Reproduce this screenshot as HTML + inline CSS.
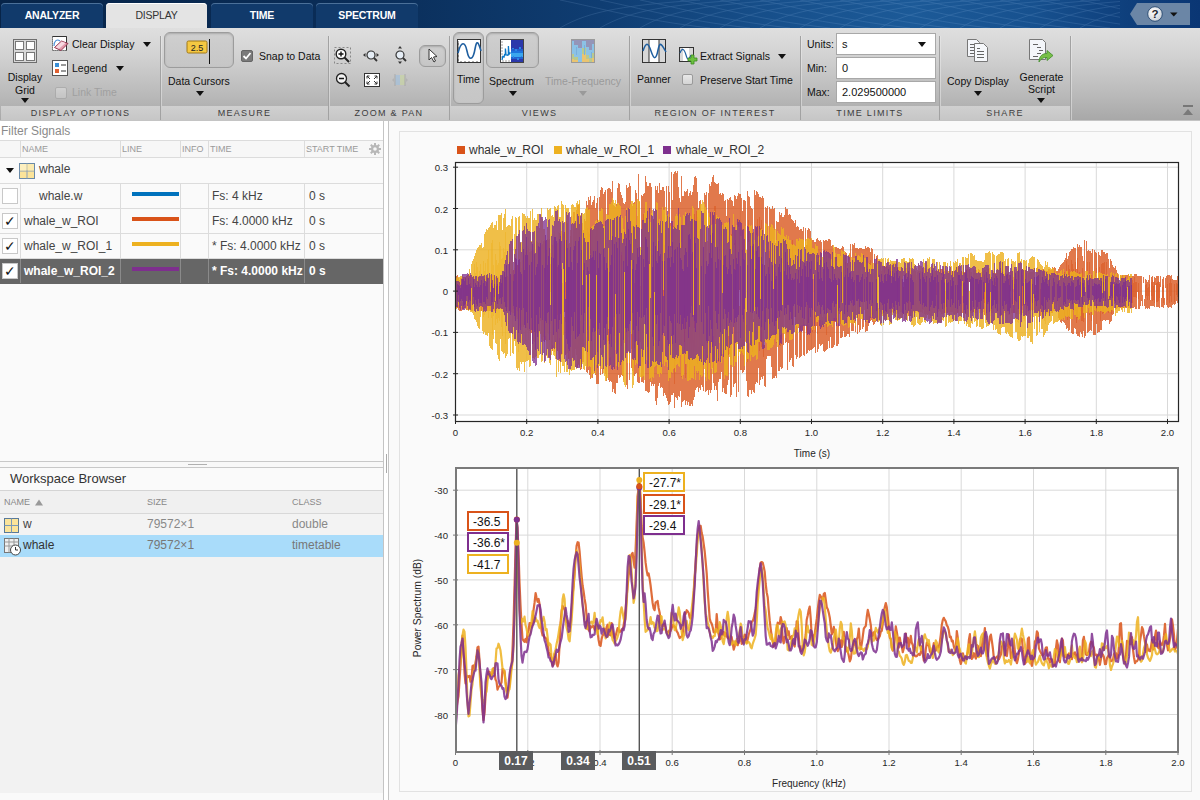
<!DOCTYPE html>
<html><head><meta charset="utf-8">
<style>
*{box-sizing:border-box;margin:0;padding:0}
html,body{width:1200px;height:800px;overflow:hidden;background:#fafafa;font-family:"Liberation Sans",sans-serif;color:#222}
.a{position:absolute}
#hdr{left:0;top:0;width:1200px;height:28px;background:linear-gradient(90deg,#072448 0%,#0a2d58 30%,#0f3d72 50%,#17508c 65%,#1c5a98 76%,#17518f 86%,#0e3f7c 94%,#0a3674 100%)}
.tab{position:absolute;top:3px;height:25px;background:#113a6b;border-radius:4px 4px 0 0;color:#fff;font-weight:bold;font-size:10.5px;letter-spacing:-0.2px;text-align:center;line-height:25px;box-shadow:inset 0 1px 0 #4b7099}
.tab.act{background:#e4e4e4;color:#333;font-weight:normal;box-shadow:inset 0 1px 0 #fff;height:26px}
#help{left:1131px;top:3px;width:59px;height:22px;background:#6b86a6}
#ribbon{left:0;top:28px;width:1200px;height:93px;background:linear-gradient(180deg,#dfdfdf 0%,#d2d2d2 30%,#b8b8b8 75%,#a8a8a8 100%);border-bottom:1px solid #c4c4c4}
.sec{position:absolute;top:0;height:92px}
.sep{position:absolute;top:8px;width:1px;height:84px;background:#a2a2a2;box-shadow:1px 0 0 rgba(235,235,235,0.5)}
.lbl{position:absolute;top:78px;height:14px;background:linear-gradient(180deg,#d0d0d0,#c6c6c6);color:#3d3d3d;font-size:9px;letter-spacing:1.3px;text-align:center;line-height:14px}
.rt{position:absolute;margin-top:1px;font-size:10.5px;color:#111;white-space:nowrap}
.dd{position:absolute;width:0;height:0;border-left:4px solid transparent;border-right:4px solid transparent;border-top:5px solid #111}
.cb{position:absolute;width:12px;height:12px;border:1px solid #9a9a9a;border-radius:2px;background:linear-gradient(#e8e8e8,#d4d4d4)}
.btnhl{position:absolute;border:1px solid #9c9c9c;border-radius:6px;background:linear-gradient(180deg,#cfcfcf,#c6c6c6);box-shadow:inset 0 1px 2px #aaa}
.inp{position:absolute;background:#fff;border:1px solid #a8a8a8;font-size:11px;line-height:20px;padding-left:5px;color:#111}
/* left panel */
#lp{left:0;top:121px;width:384px;height:679px;background:#fafafa;border-right:1px solid #c4c4c4}
.tr{position:absolute;left:0;width:383px;border-bottom:1px solid #dcdcdc}
.tc{position:absolute;top:0;height:100%;border-right:1px solid #dcdcdc;font-size:12px;color:#444;white-space:nowrap;overflow:hidden}
.th{font-size:9px;color:#9a9a9a;line-height:16px;padding-left:2px}
.cbx{position:absolute;left:2px;width:16px;height:16px;border:1px solid #c8c8c8;background:#fff;font-size:14px;line-height:15px;text-align:center;color:#111}
.ln{position:absolute;left:12px;width:47px;height:4px}
#rp{left:388px;top:121px;width:811px;height:679px;background:#fafafa;border-left:1px solid #c4c4c4}
.tick{font-size:11px;color:#222;position:absolute;white-space:nowrap}
</style></head><body>
<div id="hdr" class="a">
 <svg class="a" style="left:560px;top:0" width="560" height="28" opacity="0.22"><path d="M0 28 C30 10,70 5,140 0" stroke="#9cc3ee" stroke-width="0.7" fill="none"/><path d="M0 0 C40 8,80 20,150 28" stroke="#9cc3ee" stroke-width="0.7" fill="none"/><path d="M40 28 C70 10,110 5,180 0" stroke="#9cc3ee" stroke-width="0.7" fill="none"/><path d="M40 0 C80 8,120 20,190 28" stroke="#9cc3ee" stroke-width="0.7" fill="none"/><path d="M80 28 C110 10,150 5,220 0" stroke="#9cc3ee" stroke-width="0.7" fill="none"/><path d="M80 0 C120 8,160 20,230 28" stroke="#9cc3ee" stroke-width="0.7" fill="none"/><path d="M120 28 C150 10,190 5,260 0" stroke="#9cc3ee" stroke-width="0.7" fill="none"/><path d="M120 0 C160 8,200 20,270 28" stroke="#9cc3ee" stroke-width="0.7" fill="none"/><path d="M160 28 C190 10,230 5,300 0" stroke="#9cc3ee" stroke-width="0.7" fill="none"/><path d="M160 0 C200 8,240 20,310 28" stroke="#9cc3ee" stroke-width="0.7" fill="none"/><path d="M200 28 C230 10,270 5,340 0" stroke="#9cc3ee" stroke-width="0.7" fill="none"/><path d="M200 0 C240 8,280 20,350 28" stroke="#9cc3ee" stroke-width="0.7" fill="none"/><path d="M240 28 C270 10,310 5,380 0" stroke="#9cc3ee" stroke-width="0.7" fill="none"/><path d="M240 0 C280 8,320 20,390 28" stroke="#9cc3ee" stroke-width="0.7" fill="none"/><path d="M280 28 C310 10,350 5,420 0" stroke="#9cc3ee" stroke-width="0.7" fill="none"/><path d="M280 0 C320 8,360 20,430 28" stroke="#9cc3ee" stroke-width="0.7" fill="none"/><path d="M320 28 C350 10,390 5,460 0" stroke="#9cc3ee" stroke-width="0.7" fill="none"/><path d="M320 0 C360 8,400 20,470 28" stroke="#9cc3ee" stroke-width="0.7" fill="none"/><path d="M360 28 C390 10,430 5,500 0" stroke="#9cc3ee" stroke-width="0.7" fill="none"/><path d="M360 0 C400 8,440 20,510 28" stroke="#9cc3ee" stroke-width="0.7" fill="none"/><path d="M400 28 C430 10,470 5,540 0" stroke="#9cc3ee" stroke-width="0.7" fill="none"/><path d="M400 0 C440 8,480 20,550 28" stroke="#9cc3ee" stroke-width="0.7" fill="none"/><path d="M440 28 C470 10,510 5,580 0" stroke="#9cc3ee" stroke-width="0.7" fill="none"/><path d="M440 0 C480 8,520 20,590 28" stroke="#9cc3ee" stroke-width="0.7" fill="none"/><path d="M480 28 C510 10,550 5,620 0" stroke="#9cc3ee" stroke-width="0.7" fill="none"/><path d="M480 0 C520 8,560 20,630 28" stroke="#9cc3ee" stroke-width="0.7" fill="none"/><path d="M520 28 C550 10,590 5,660 0" stroke="#9cc3ee" stroke-width="0.7" fill="none"/><path d="M520 0 C560 8,600 20,670 28" stroke="#9cc3ee" stroke-width="0.7" fill="none"/></svg>
 <div class="tab" style="left:1px;width:102px">ANALYZER</div>
 <div class="tab act" style="left:106px;width:101px">DISPLAY</div>
 <div class="tab" style="left:211px;width:102px">TIME</div>
 <div class="tab" style="left:316px;width:102px">SPECTRUM</div>
 <svg class="a" style="left:1118px;top:3px" width="72" height="22"><path d="M19 0H72V22H19L12 11Z" fill="#6b86a6"/><defs><radialGradient id="hg" cx="0.4" cy="0.35" r="0.7"><stop offset="0" stop-color="#fff"/><stop offset="1" stop-color="#c8ced6"/></radialGradient></defs><circle cx="37" cy="11" r="7.3" fill="url(#hg)" stroke="#24466e" stroke-width="0.9"/><text x="37" y="15.3" font-family="Liberation Sans" font-weight="bold" font-size="11.5" text-anchor="middle" fill="#1d2630">?</text><path d="M52 9.5h7.5l-3.75 4z" fill="#111"/></svg>
</div>
<div id="ribbon" class="a">
 <!-- separators -->
 <div class="sep" style="left:160px"></div>
 <div class="sep" style="left:328px"></div>
 <div class="sep" style="left:449px"></div>
 <div class="sep" style="left:629px"></div>
 <div class="sep" style="left:800px"></div>
 <div class="sep" style="left:939px"></div>
 <div class="sep" style="left:1070px"></div>
 <!-- labels -->
 <div class="lbl" style="left:1px;width:159px">DISPLAY OPTIONS</div>
 <div class="lbl" style="left:161px;width:167px">MEASURE</div>
 <div class="lbl" style="left:329px;width:120px">ZOOM &amp; PAN</div>
 <div class="lbl" style="left:450px;width:179px">VIEWS</div>
 <div class="lbl" style="left:630px;width:170px">REGION OF INTEREST</div>
 <div class="lbl" style="left:801px;width:138px">TIME LIMITS</div>
 <div class="lbl" style="left:940px;width:130px">SHARE</div>
 <!-- DISPLAY OPTIONS -->
 <svg class="a" style="left:13px;top:11px" width="25" height="24"><rect x="0.5" y="0.5" width="23" height="23" fill="#d8d8d8" stroke="#6e6e6e"/><rect x="2.5" y="2.5" width="8" height="8" fill="#fff" stroke="#777" stroke-width="1"/><rect x="13.5" y="2.5" width="8" height="8" fill="#fff" stroke="#777"/><rect x="2.5" y="13.5" width="8" height="8" fill="#fff" stroke="#777"/><rect x="13.5" y="13.5" width="8" height="8" fill="#fff" stroke="#777"/></svg>
 <div class="rt" style="left:5px;top:42px;width:40px;text-align:center;line-height:13px">Display<br>Grid</div>
 <div class="dd" style="left:21px;top:70px"></div>
 <svg class="a" style="left:52px;top:8px" width="17" height="16"><rect x="0.5" y="0.5" width="14" height="14" fill="#fff" stroke="#444" stroke-dasharray="1.2,0.8"/><path d="M14.5 0.5V14.5M0.5 0.5H14.5" stroke="#333"/><path d="M2 10 C2 5, 5 2.5, 8 5" stroke="#4a90d9" stroke-width="1.1" fill="none"/><path d="M2.5 11.5 L9.5 5 L16 7.5 L9 14.5Z" fill="#e39aab" stroke="#8c2a46" stroke-width="0.9"/><path d="M3.5 11.2 L9.8 5.6 L13.5 7 L7 12.8Z" fill="#f6d8e0"/></svg>
 <div class="rt" style="left:72px;top:9px">Clear Display</div>
 <div class="dd" style="left:143px;top:14px"></div>
 <svg class="a" style="left:52px;top:32px" width="17" height="17"><rect x="0.5" y="0.5" width="15" height="15" fill="#fff" stroke="#555"/><rect x="3" y="3" width="4" height="4" fill="#3a8fd6"/><rect x="3" y="9" width="4" height="4" fill="#e06030"/><path d="M9 5h5M9 11h5" stroke="#333"/></svg>
 <div class="rt" style="left:72px;top:33px">Legend</div>
 <div class="dd" style="left:116px;top:38px"></div>
 <div class="cb" style="left:55px;top:59px;opacity:.45"></div>
 <div class="rt" style="left:72px;top:57px;color:#a0a0a0">Link Time</div>
 <!-- MEASURE -->
 <div class="btnhl" style="left:164px;top:4px;width:70px;height:36px"></div>
 <svg class="a" style="left:186px;top:11px" width="26" height="26"><rect x="1" y="2" width="20" height="12" rx="1.5" fill="#f5c842" stroke="#a07818"/><text x="11" y="12" font-family="Liberation Sans" font-size="9" text-anchor="middle" fill="#222">2.5</text><path d="M23.5 0V25" stroke="#111"/></svg>
 <div class="rt" style="left:168px;top:46px">Data Cursors</div>
 <div class="dd" style="left:196px;top:63px"></div>
 <svg class="a" style="left:241px;top:22px" width="12" height="12"><rect x="0.5" y="0.5" width="11" height="11" rx="1.5" fill="#7a7a7a" stroke="#666"/><path d="M2.5 6 L5 8.5 L9.5 3" stroke="#fff" stroke-width="1.8" fill="none"/></svg>
 <div class="rt" style="left:259px;top:21px">Snap to Data</div>
 <!-- ZOOM PAN -->
 <svg class="a" style="left:334px;top:19px" width="18" height="18"><rect x="0.5" y="0.5" width="16" height="16" fill="none" stroke="#888" stroke-dasharray="2,2"/><circle cx="7" cy="7" r="4.8" fill="#fff" stroke="#222" stroke-width="1.4"/><path d="M4.5 7h5M7 4.5v5" stroke="#111" stroke-width="1.4"/><path d="M10.5 10.5L15 15" stroke="#222" stroke-width="2"/></svg>
 <svg class="a" style="left:362px;top:20px" width="18" height="16"><circle cx="9" cy="7" r="4" fill="#e6eef6" stroke="#333" stroke-width="1.2"/><path d="M12 10L15 13" stroke="#333" stroke-width="1.8"/><path d="M1 7L3.5 5V9Z M17 7L14.5 5V9Z" fill="#333"/></svg>
 <svg class="a" style="left:393px;top:18px" width="16" height="19"><circle cx="7" cy="9" r="4" fill="#e6eef6" stroke="#333" stroke-width="1.2"/><path d="M10 12L13 15" stroke="#333" stroke-width="1.8"/><path d="M7 0L5 2.5H9Z M7 18L5 15.5H9Z" fill="#333"/></svg>
 <div class="btnhl" style="left:419px;top:17px;width:27px;height:22px"></div>
 <svg class="a" style="left:425px;top:20px" width="14" height="16"><path d="M4 1 L4 12 L6.5 9.5 L9 14 L10.5 13 L8.5 9 L12 8.5Z" fill="#fff" stroke="#333" stroke-width="1"/></svg>
 <svg class="a" style="left:335px;top:44px" width="16" height="16"><circle cx="6.5" cy="6.5" r="5" fill="#f2f2f2" stroke="#222" stroke-width="1.3"/><path d="M4 6.5h5" stroke="#111" stroke-width="1.5"/><path d="M10 10L14.5 14.5" stroke="#222" stroke-width="2"/></svg>
 <svg class="a" style="left:364px;top:45px" width="17" height="15"><rect x="0.5" y="0.5" width="15" height="13" fill="#fff" stroke="#333"/><path d="M3 3l3 3M3 3h2.5M3 3v2.5 M13 3l-3 3M13 3h-2.5M13 3v2.5 M3 11l3-3M3 11h2.5M3 11v-2.5 M13 11l-3-3M13 11h-2.5M13 11v-2.5" stroke="#333" fill="none"/></svg>
 <svg class="a" style="left:392px;top:45px" width="17" height="14" opacity="0.6"><rect x="3" y="2" width="10" height="10" fill="#c9d8a0"/><rect x="3" y="2" width="5" height="10" fill="#9ec0e0"/><path d="M3 1v12M13 1v12" stroke="#999"/><path d="M0 7l2-2v4z M16 7l-2-2v4z" fill="#aaa"/></svg>
 <!-- VIEWS -->
 <div class="btnhl" style="left:453px;top:4px;width:31px;height:72px"></div>
 <svg class="a" style="left:457px;top:11px" width="25" height="24"><rect x="0.5" y="0.5" width="23" height="23" fill="#fff" stroke="#333"/><path d="M1 2v21M1 5h1M1 9h1M1 13h1M1 17h1M1 21h1 M4 23v-1M8 23v-1M12 23v-1M16 23v-1M20 23v-1" stroke="#333" stroke-width="0.8"/><path d="M1 14 C4 2, 8 2, 10 12 S16 22, 18 10 S22 6, 24 12" stroke="#1f5fa0" stroke-width="1.6" fill="none"/></svg>
 <div class="rt" style="left:457px;top:44px">Time</div>
 <div class="btnhl" style="left:486px;top:4px;width:53px;height:36px"></div>
 <svg class="a" style="left:500px;top:11px" width="24" height="24"><rect x="0.5" y="0.5" width="23" height="23" fill="#fff" stroke="#444"/><rect x="11" y="1" width="12" height="22" fill="#2b38ab"/><path d="M11 12h12v2H11z" fill="#1d74de"/><path d="M11 14h12v4H11z" fill="#3aa6ee"/><path d="M11 10h12v2H11z" fill="#2160cf"/><path d="M11 18h12v2H11z" fill="#1f63d2"/><path d="M12 9h2v1h-2zM15 10h2v2h-2zM19 8h2v2h-2zM13 17h1v2h-1zM17 19h2v2h-2zM21 17h1v1h-1z" fill="#2a86e6"/><path d="M1.5 3h1M1.5 6h1M1.5 9h1M1.5 12h1M1.5 15h1M1.5 18h1M3 22.5v-1M6 22.5v-1M9 22.5v-1" stroke="#444" stroke-width="1"/><path d="M2 21 L2.8 17.5 L4 18 L4.6 15.5 L5.4 15.8 L5.4 9.5 L6 15.8 L7.5 16.2 L8.4 15.2 L8.4 7 L9 15.3 L10.5 13.5" stroke="#0a78c8" stroke-width="1.3" fill="none"/></svg>
 <div class="rt" style="left:489px;top:46px">Spectrum</div>
 <div class="dd" style="left:509px;top:63px"></div>
 <svg class="a" style="left:571px;top:11px" width="24" height="24"><rect x="0.5" y="0.5" width="23" height="23" fill="#9495b8" stroke="#9a9a9a"/><rect x="1" y="2" width="2" height="21" fill="#8cc2e6"/><rect x="1" y="15" width="2" height="8" fill="#b9c98e"/><rect x="1" y="20" width="2" height="3" fill="#eac470"/><rect x="3" y="6" width="4" height="17" fill="#8cc2e6"/><rect x="3" y="18" width="4" height="5" fill="#b9c98e"/><rect x="3" y="21" width="4" height="2" fill="#eac470"/><rect x="7" y="9" width="4" height="14" fill="#8cc2e6"/><rect x="11" y="2" width="4" height="21" fill="#8cc2e6"/><rect x="11" y="9" width="4" height="14" fill="#b9c98e"/><rect x="11" y="15" width="4" height="8" fill="#eac470"/><rect x="15" y="8" width="3" height="15" fill="#8cc2e6"/><rect x="15" y="16" width="3" height="7" fill="#b9c98e"/><rect x="15" y="20" width="3" height="3" fill="#eac470"/><rect x="18" y="11" width="3" height="12" fill="#8cc2e6"/><rect x="18" y="19" width="3" height="4" fill="#b9c98e"/><rect x="21" y="5" width="2" height="18" fill="#8cc2e6"/><rect x="21" y="14" width="2" height="9" fill="#b9c98e"/><rect x="21" y="19" width="2" height="4" fill="#eac470"/><path d="M5 8h1v8h-1zM13 6h1v10h-1zM20 13h1v6h-1z" fill="#7ab0dc"/></svg>
 <div class="rt" style="left:545px;top:46px;color:#9a9a9a">Time-Frequency</div>
 <div class="dd" style="left:579px;top:63px;border-top-color:#9a9a9a"></div>
 <!-- REGION OF INTEREST -->
 <svg class="a" style="left:642px;top:11px" width="25" height="24"><rect x="0.5" y="0.5" width="23" height="23" fill="#d8d8d8" stroke="#333"/><rect x="7" y="1" width="10" height="22" fill="#fff"/><path d="M7 0.5v23M17 0.5v23" stroke="#333"/><path d="M1 12 C4 3, 6 3, 9 12 S14 21, 16 11 S20 6, 24 13" stroke="#1f5fa0" stroke-width="1.5" fill="none"/></svg>
 <div class="rt" style="left:637px;top:44px">Panner</div>
 <svg class="a" style="left:679px;top:19px" width="19" height="18"><rect x="0.5" y="0.5" width="14" height="14" fill="#d8d8d8" stroke="#333"/><rect x="4" y="1" width="6" height="13" fill="#fff"/><path d="M1 6 C3 1, 5 1, 7 8 S10 12, 12 8" stroke="#1f5fa0" stroke-width="1.2" fill="none"/><path d="M12 8h3v3h3v3h-3v3h-3v-3h-3v-3h3z" fill="#6cc040" stroke="#3a8a20" stroke-width="0.8"/></svg>
 <div class="rt" style="left:700px;top:21px">Extract Signals</div>
 <div class="dd" style="left:778px;top:26px"></div>
 <div class="cb" style="left:682px;top:46px;width:11px;height:11px"></div>
 <div class="rt" style="left:700px;top:45px">Preserve Start Time</div>
 <!-- TIME LIMITS -->
 <div class="rt" style="left:807px;top:9px">Units:</div>
 <div class="inp" style="left:836px;top:5px;width:100px;height:22px">s</div>
 <div class="dd" style="left:918px;top:14px"></div>
 <div class="rt" style="left:807px;top:33px">Min:</div>
 <div class="inp" style="left:836px;top:29px;width:100px;height:22px">0</div>
 <div class="rt" style="left:807px;top:57px">Max:</div>
 <div class="inp" style="left:836px;top:53px;width:100px;height:22px">2.029500000</div>
 <!-- SHARE -->
 <svg class="a" style="left:967px;top:40px;margin-top:-29px" width="24" height="24"><path d="M0.5 0.5h9l3 3v14h-12z" fill="#f4f6fa" stroke="#777"/><path d="M3 5.5h4M3 8.5h5M3 11.5h5M3 14.5h5" stroke="#555" stroke-width="0.9"/><path d="M7.5 4.5h9l4 4v14h-13z" fill="#f6f8fb" stroke="#777"/><path d="M10 9.5h3M10 12.5h7M10 15.5h7M10 18.5h7" stroke="#555" stroke-width="0.9"/></svg>
 <div class="rt" style="left:947px;top:46px">Copy Display</div>
 <div class="dd" style="left:974px;top:63px"></div>
 <svg class="a" style="left:1029px;top:11px" width="26" height="26"><path d="M0.5 0.5h13l3 3v17h-16z" fill="#f4f6fa" stroke="#777"/><path d="M4 5.5h5M8 8.5h4M10 11.5h4M8 14.5h4M4 17.5h5" stroke="#555" stroke-width="0.9"/><path d="M10 23 C10 17, 13.5 14.5, 18 14.5 V11.5 L24 16.5 L18 21.5 V18.5 C14.5 18.5, 12 19.5, 10 23Z" fill="#78c048" stroke="#3d8a28" stroke-width="0.8"/></svg>
 <div class="rt" style="left:1019px;top:42px;width:45px;text-align:center;line-height:12px">Generate<br>Script</div>
 <div class="dd" style="left:1037px;top:70px"></div>
 <svg class="a" style="left:1182px;top:76px" width="12" height="12"><rect x="1" y="1" width="10" height="2" fill="#777"/><path d="M1 11L6 5L11 11Z" fill="#7a7a7a"/></svg>
</div>
<div id="lp" class="a">
 <div class="a" style="left:0;top:0;width:383px;height:20px;background:#fff;border-bottom:1px solid #dcdcdc;font-size:12px;color:#8a8a8a;line-height:21px;padding-left:1px">Filter Signals</div>
 <!-- header -->
 <div class="tr" style="top:20px;height:17px;background:#f7f7f7">
  <div class="tc" style="left:0;width:21px"></div>
  <div class="tc th" style="left:20px;width:101px">NAME</div>
  <div class="tc th" style="left:120px;width:61px">LINE</div>
  <div class="tc th" style="left:180px;width:29px">INFO</div>
  <div class="tc th" style="left:208px;width:97px">TIME</div>
  <div class="tc th" style="left:304px;width:79px;border-right:none">START TIME</div>
  <svg class="a" style="left:369px;top:2px" width="12" height="12"><g fill="#b8b8b8"><circle cx="6" cy="6" r="4"/><rect x="5" y="0" width="2" height="12"/><rect x="0" y="5" width="12" height="2"/><rect x="5" y="0" width="2" height="12" transform="rotate(45 6 6)"/><rect x="5" y="0" width="2" height="12" transform="rotate(-45 6 6)"/></g><circle cx="6" cy="6" r="1.8" fill="#f7f7f7"/></svg>
 </div>
 <!-- whale group -->
 <div class="tr" style="top:37px;height:26px;background:#fafafa">
  <div class="dd" style="left:6px;top:10px;border-top-color:#111"></div>
  <svg class="a" style="left:19px;top:5px" width="16" height="16"><rect x="0.5" y="0.5" width="15" height="15" fill="#fbe49a" stroke="#6a8aa8"/><path d="M8 0.5v15M0.5 8h15" stroke="#8aa0b8"/><rect x="1" y="1" width="6.5" height="6.5" fill="#fdf0c0"/><rect x="8.5" y="1" width="6.5" height="6.5" fill="#fcebb0"/></svg>
  <div class="a" style="left:39px;top:4px;font-size:12px;color:#444">whale</div>
 </div>
 <div class="tr" style="top:63px;height:25px">
  <div class="tc" style="left:0;width:21px"><div class="cbx" style="top:4px"></div></div>
  <div class="tc" style="left:20px;width:101px;padding:5px 0 0 19px">whale.w</div>
  <div class="tc" style="left:120px;width:61px"><div class="ln" style="top:8px;background:#0072bd"></div></div>
  <div class="tc" style="left:180px;width:29px"></div>
  <div class="tc" style="left:208px;width:97px;padding:5px 0 0 4px">Fs: 4 kHz</div>
  <div class="tc" style="left:304px;width:79px;padding:5px 0 0 5px;border-right:none">0 s</div>
 </div>
 <div class="tr" style="top:88px;height:25px">
  <div class="tc" style="left:0;width:21px"><div class="cbx" style="top:4px">&#10003;</div></div>
  <div class="tc" style="left:20px;width:101px;padding:5px 0 0 4px">whale_w_ROI</div>
  <div class="tc" style="left:120px;width:61px"><div class="ln" style="top:8px;background:#d95319"></div></div>
  <div class="tc" style="left:180px;width:29px"></div>
  <div class="tc" style="left:208px;width:97px;padding:5px 0 0 4px">Fs: 4.0000 kHz</div>
  <div class="tc" style="left:304px;width:79px;padding:5px 0 0 5px;border-right:none">0 s</div>
 </div>
 <div class="tr" style="top:113px;height:25px">
  <div class="tc" style="left:0;width:21px"><div class="cbx" style="top:4px">&#10003;</div></div>
  <div class="tc" style="left:20px;width:101px;padding:5px 0 0 4px">whale_w_ROI_1</div>
  <div class="tc" style="left:120px;width:61px"><div class="ln" style="top:8px;background:#edb120"></div></div>
  <div class="tc" style="left:180px;width:29px"></div>
  <div class="tc" style="left:208px;width:97px;padding:5px 0 0 4px">* Fs: 4.0000 kHz</div>
  <div class="tc" style="left:304px;width:79px;padding:5px 0 0 5px;border-right:none">0 s</div>
 </div>
 <div class="tr" style="top:138px;height:25px;background:#666;border-bottom-color:#666">
  <div class="tc" style="left:0;width:21px;border-right-color:#8a8a8a"><div class="cbx" style="top:4px">&#10003;</div></div>
  <div class="tc" style="left:20px;width:101px;padding:5px 0 0 4px;color:#fff;font-weight:bold;border-right-color:#8a8a8a">whale_w_ROI_2</div>
  <div class="tc" style="left:120px;width:61px;border-right-color:#8a8a8a"><div class="ln" style="top:8px;background:#7e2f8e"></div></div>
  <div class="tc" style="left:180px;width:29px;border-right-color:#8a8a8a"></div>
  <div class="tc" style="left:208px;width:97px;padding:5px 0 0 4px;color:#fff;font-weight:bold;border-right-color:#8a8a8a">* Fs: 4.0000 kHz</div>
  <div class="tc" style="left:304px;width:79px;padding:5px 0 0 5px;border-right:none;color:#fff;font-weight:bold">0 s</div>
 </div>
 <!-- splitter -->
 <div class="a" style="left:0;top:340px;width:383px;height:7px;border-top:1px solid #c8c8c8;border-bottom:1px solid #c8c8c8;background:#f8f8f8"></div>
 <div class="a" style="left:188px;top:343px;width:19px;height:1px;background:#b0b0b0"></div>
 <!-- workspace browser -->
 <div class="a" style="left:0;top:347px;width:383px;height:23px;background:#fafafa;border-bottom:1px solid #d4d4d4;font-size:13px;color:#333;line-height:22px;padding-left:10px">Workspace Browser</div>
 <div class="a" style="left:0;top:370px;width:383px;height:302px;background:#f2f2f2"></div>
 <div class="a" style="left:0;top:370px;width:383px;height:23px;background:#f0f0f0;border-bottom:1px solid #d8d8d8;font-size:9px;color:#888;line-height:22px">
  <span class="a" style="left:4px">NAME</span><svg class="a" style="left:35px;top:8px" width="8" height="7"><path d="M0 6.5L4 0.5L8 6.5Z" fill="#999"/></svg>
  <span class="a" style="left:147px">SIZE</span><span class="a" style="left:292px">CLASS</span>
 </div>
 <div class="a" style="left:0;top:393px;width:383px;height:21px;background:#f3f3f3;font-size:12px;color:#888;line-height:21px">
  <svg class="a" style="left:4px;top:4px" width="15" height="15"><rect x="0.5" y="0.5" width="14" height="14" fill="#fbe49a" stroke="#5a7a9a"/><path d="M7.5 0.5v14M0.5 7.5h14" stroke="#7a9ab8"/></svg>
  <span class="a" style="left:23px;color:#444">w</span><span class="a" style="left:147px">79572×1</span><span class="a" style="left:292px">double</span>
 </div>
 <div class="a" style="left:0;top:414px;width:383px;height:22px;background:#a9dcfa;font-size:12px;color:#777;line-height:21px">
  <svg class="a" style="left:4px;top:3px" width="18" height="18"><rect x="0.5" y="0.5" width="14" height="14" fill="#f0f0f0" stroke="#777"/><path d="M0.5 4h14M0.5 8h14M5 0.5v14M10 0.5v14" stroke="#999"/><circle cx="11.5" cy="12" r="5" fill="#fff" stroke="#444"/><path d="M11.5 9v3h2.5" stroke="#333" fill="none"/></svg>
  <span class="a" style="left:23px;color:#333">whale</span><span class="a" style="left:147px">79572×1</span><span class="a" style="left:292px">timetable</span>
 </div>
</div>
<!-- vertical divider -->
<div class="a" style="left:384px;top:121px;width:4px;height:679px;background:#fff"></div>
<div class="a" style="left:386px;top:454px;width:1px;height:19px;background:#aaa"></div>
<div id="rp" class="a"></div><svg class="a" style="left:0;top:0" width="1200" height="800"><rect x="399.5" y="131.5" width="792" height="660" fill="#fafafa" stroke="#e2e2e2"/><rect x="455.5" y="162.5" width="723" height="259" fill="#fff"/><path d="M455.5 163V421" stroke="#d9d9d9" stroke-width="1"/><path d="M526.7 163V421" stroke="#d9d9d9" stroke-width="1"/><path d="M597.9 163V421" stroke="#d9d9d9" stroke-width="1"/><path d="M669.1 163V421" stroke="#d9d9d9" stroke-width="1"/><path d="M740.3 163V421" stroke="#d9d9d9" stroke-width="1"/><path d="M811.5 163V421" stroke="#d9d9d9" stroke-width="1"/><path d="M882.7 163V421" stroke="#d9d9d9" stroke-width="1"/><path d="M953.9 163V421" stroke="#d9d9d9" stroke-width="1"/><path d="M1025.1 163V421" stroke="#d9d9d9" stroke-width="1"/><path d="M1096.3 163V421" stroke="#d9d9d9" stroke-width="1"/><path d="M1167.5 163V421" stroke="#d9d9d9" stroke-width="1"/><path d="M456 415.0H1178" stroke="#d9d9d9" stroke-width="1"/><path d="M456 373.7H1178" stroke="#d9d9d9" stroke-width="1"/><path d="M456 332.4H1178" stroke="#d9d9d9" stroke-width="1"/><path d="M456 291.1H1178" stroke="#d9d9d9" stroke-width="1"/><path d="M456 249.8H1178" stroke="#d9d9d9" stroke-width="1"/><path d="M456 208.5H1178" stroke="#d9d9d9" stroke-width="1"/><path d="M456 167.2H1178" stroke="#d9d9d9" stroke-width="1"/><g clip-path="url(#c1)" shape-rendering="crispEdges"><path d="M456.5 276V308M457.5 275V308M458.5 278V310M459.5 280V311M460.5 278V311M461.5 278V311M462.5 302V309M463.5 277V309M464.5 277V308M465.5 277V308M466.5 276V310M467.5 275V310M468.5 275V310M469.5 275V310M470.5 275V309M471.5 275V311M472.5 277V311M473.5 277V303M474.5 277V311M475.5 277V312M476.5 277V307M477.5 277V307M478.5 276V289M479.5 277V311M480.5 277V311M481.5 277V311M482.5 277V310M483.5 275V309M484.5 276V309M485.5 276V309M486.5 277V310M487.5 277V311M488.5 277V311M489.5 275V311M490.5 275V311M491.5 275V311M492.5 275V311M493.5 275V310M494.5 295V311M495.5 277V311M496.5 277V311M497.5 277V309M498.5 277V309M499.5 295V302M500.5 288V309M501.5 277V309M502.5 277V309M503.5 277V311M504.5 276V312M505.5 277V311M506.5 277V311M507.5 276V307M508.5 277V311M509.5 278V311M510.5 276V313M511.5 275V312M512.5 271V313M513.5 270V313M514.5 268V315M515.5 268V315M516.5 266V317M517.5 265V319M518.5 264V319M519.5 262V326M520.5 262V328M521.5 296V327M522.5 260V325M523.5 260V327M524.5 254V280M525.5 252V328M526.5 250V328M527.5 250V330M528.5 248V320M529.5 252V331M530.5 252V333M531.5 251V333M532.5 250V334M533.5 250V341M534.5 244V342M535.5 254V341M536.5 241V333M537.5 242V332M538.5 243V333M539.5 247V332M540.5 246V321M541.5 245V339M542.5 244V342M543.5 241V337M544.5 240V277M545.5 241V340M546.5 289V341M547.5 239V333M548.5 240V324M549.5 239V333M550.5 264V292M551.5 244V349M552.5 245V351M553.5 240V285M554.5 242V352M555.5 246V348M556.5 244V348M557.5 243V351M558.5 242V352M559.5 233V361M560.5 234V361M561.5 231V355M562.5 283V354M563.5 234V335M564.5 232V282M565.5 222V355M566.5 221V354M567.5 223V353M568.5 244V359M569.5 250V359M570.5 236V361M571.5 216V331M572.5 322V357M573.5 212V359M574.5 212V361M575.5 223V349M576.5 210V355M577.5 205V368M578.5 205V364M579.5 204V366M580.5 321V370M581.5 219V369M582.5 223V362M583.5 230V362M584.5 219V293M585.5 221V270M586.5 201V372M587.5 205V373M588.5 197V370M589.5 200V375M590.5 196V379M591.5 205V377M592.5 202V378M593.5 200V284M594.5 196V373M595.5 208V375M596.5 203V384M597.5 198V384M598.5 223V384M599.5 197V303M600.5 190V375M601.5 187V255M602.5 188V374M603.5 194V353M604.5 192V297M605.5 190V374M606.5 299V381M607.5 189V365M608.5 188V380M609.5 188V382M610.5 189V381M611.5 192V382M612.5 181V392M613.5 205V389M614.5 206V393M615.5 207V394M616.5 204V383M617.5 188V383M618.5 183V375M619.5 184V378M620.5 192V377M621.5 195V375M622.5 198V376M623.5 203V380M624.5 204V343M625.5 202V357M626.5 185V385M627.5 188V389M628.5 187V283M629.5 183V380M630.5 186V247M631.5 204V368M632.5 206V371M633.5 203V375M634.5 202V376M635.5 190V374M636.5 193V373M637.5 216V382M638.5 174V383M639.5 202V383M640.5 286V342M641.5 195V382M642.5 196V382M643.5 194V383M644.5 193V301M645.5 176V391M646.5 182V391M647.5 186V392M648.5 186V393M649.5 183V392M650.5 183V382M651.5 187V386M652.5 332V384M653.5 219V386M654.5 211V384M655.5 186V401M656.5 190V405M657.5 186V398M658.5 193V386M659.5 183V383M660.5 190V388M661.5 190V387M662.5 187V388M663.5 187V396M664.5 191V393M665.5 230V395M666.5 186V398M667.5 300V401M668.5 186V405M669.5 192V404M670.5 223V402M671.5 172V395M672.5 200V395M673.5 174V393M674.5 172V408M675.5 171V397M676.5 173V398M677.5 171V400M678.5 187V396M679.5 198V397M680.5 202V391M681.5 176V407M682.5 196V402M683.5 196V401M684.5 191V400M685.5 192V405M686.5 191V401M687.5 189V405M688.5 196V402M689.5 193V406M690.5 191V406M691.5 195V404M692.5 192V406M693.5 185V400M694.5 177V397M695.5 176V390M696.5 178V388M697.5 192V387M698.5 208V392M699.5 201V388M700.5 200V390M701.5 228V385M702.5 221V387M703.5 334V391M704.5 193V349M705.5 195V392M706.5 192V391M707.5 319V390M708.5 193V395M709.5 184V390M710.5 186V393M711.5 182V390M712.5 177V368M713.5 175V383M714.5 182V390M715.5 183V386M716.5 184V390M717.5 184V401M718.5 183V382M719.5 194V379M720.5 193V379M721.5 195V372M722.5 193V392M723.5 194V388M724.5 201V393M725.5 200V394M726.5 216V394M727.5 199V385M728.5 200V380M729.5 198V354M730.5 197V397M731.5 200V395M732.5 201V270M733.5 206V387M734.5 195V384M735.5 196V383M736.5 199V397M737.5 196V265M738.5 193V392M739.5 194V290M740.5 194V370M741.5 198V370M742.5 211V373M743.5 200V372M744.5 200V370M745.5 201V341M746.5 325V381M747.5 191V396M748.5 196V397M749.5 197V390M750.5 206V390M751.5 208V394M752.5 209V390M753.5 319V392M754.5 190V393M755.5 195V384M756.5 191V382M757.5 192V383M758.5 194V368M759.5 197V385M760.5 197V380M761.5 198V377M762.5 196V379M763.5 198V376M764.5 345V386M765.5 207V387M766.5 208V359M767.5 206V356M768.5 241V356M769.5 207V356M770.5 209V356M771.5 209V367M772.5 206V379M773.5 209V378M774.5 208V378M775.5 243V376M776.5 221V378M777.5 222V340M778.5 222V371M779.5 212V371M780.5 215V367M781.5 213V369M782.5 217V368M783.5 217V345M784.5 215V299M785.5 207V343M786.5 209V342M787.5 209V370M788.5 215V343M789.5 214V362M790.5 215V360M791.5 219V358M792.5 220V366M793.5 221V367M794.5 223V283M795.5 220V355M796.5 227V359M797.5 226V357M798.5 227V328M799.5 230V358M800.5 229V357M801.5 229V356M802.5 231V330M803.5 227V355M804.5 291V356M805.5 228V292M806.5 245V354M807.5 230V353M808.5 228V350M809.5 229V351M810.5 231V350M811.5 239V350M812.5 240V349M813.5 240V348M814.5 242V347M815.5 242V353M816.5 239V326M817.5 238V352M818.5 240V349M819.5 241V344M820.5 240V346M821.5 242V345M822.5 317V344M823.5 240V351M824.5 241V352M825.5 240V351M826.5 240V350M827.5 241V349M828.5 239V341M829.5 239V348M830.5 240V337M831.5 246V348M832.5 245V348M833.5 248V347M834.5 257V345M835.5 247V322M836.5 247V346M837.5 248V346M838.5 248V344M839.5 249V287M840.5 249V338M841.5 248V338M842.5 246V337M843.5 247V331M844.5 253V337M845.5 252V337M846.5 253V336M847.5 263V334M848.5 255V334M849.5 254V337M850.5 244V295M851.5 303V331M852.5 244V331M853.5 245V331M854.5 243V323M855.5 248V332M856.5 248V286M857.5 248V334M858.5 249V325M859.5 248V332M860.5 248V330M861.5 248V268M862.5 249V329M863.5 249V327M864.5 249V299M865.5 246V332M866.5 248V331M867.5 247V331M868.5 247V326M869.5 248V323M870.5 252V321M871.5 248V320M872.5 249V322M873.5 303V325M874.5 254V324M875.5 264V322M876.5 256V319M877.5 255V318M878.5 308V320M879.5 260V320M880.5 261V312M881.5 271V314M882.5 265V314M883.5 266V316M884.5 266V317M885.5 266V316M886.5 266V314M887.5 262V313M888.5 267V313M889.5 267V312M890.5 267V313M891.5 265V312M892.5 263V312M893.5 263V313M894.5 263V305M895.5 263V313M896.5 263V314M897.5 267V313M898.5 267V314M899.5 267V311M900.5 267V312M901.5 267V312M902.5 268V315M903.5 287V314M904.5 267V285M905.5 268V315M906.5 268V316M907.5 273V314M908.5 273V316M909.5 267V316M910.5 268V316M911.5 269V316M912.5 270V313M913.5 271V312M914.5 270V313M915.5 271V313M916.5 280V311M917.5 272V312M918.5 271V313M919.5 271V312M920.5 271V312M921.5 291V312M922.5 268V313M923.5 275V310M924.5 268V314M925.5 268V315M926.5 270V314M927.5 269V315M928.5 268V314M929.5 300V315M930.5 274V316M931.5 273V316M932.5 274V313M933.5 273V313M934.5 270V313M935.5 271V314M936.5 270V313M937.5 300V312M938.5 270V312M939.5 269V311M940.5 269V312M941.5 269V314M942.5 269V314M943.5 271V314M944.5 271V313M945.5 291V313M946.5 272V313M947.5 273V313M948.5 271V312M949.5 271V316M950.5 295V312M951.5 271V312M952.5 271V312M953.5 271V314M954.5 271V314M955.5 271V314M956.5 267V314M957.5 267V313M958.5 268V313M959.5 267V288M960.5 273V313M961.5 271V313M962.5 272V313M963.5 271V313M964.5 272V313M965.5 269V314M966.5 276V315M967.5 269V315M968.5 270V281M969.5 269V282M970.5 272V313M971.5 272V313M972.5 302V313M973.5 269V312M974.5 270V313M975.5 270V313M976.5 270V313M977.5 276V316M978.5 269V309M979.5 270V313M980.5 278V306M981.5 272V313M982.5 268V313M983.5 271V312M984.5 270V315M985.5 270V316M986.5 305V315M987.5 269V311M988.5 269V304M989.5 268V311M990.5 274V311M991.5 304V313M992.5 272V313M993.5 271V313M994.5 273V288M995.5 273V309M996.5 274V312M997.5 273V312M998.5 291V304M999.5 270V316M1000.5 271V316M1001.5 271V316M1002.5 274V315M1003.5 274V313M1004.5 274V313M1005.5 273V313M1006.5 274V312M1007.5 273V312M1008.5 272V315M1009.5 275V315M1010.5 271V291M1011.5 271V313M1012.5 271V313M1013.5 277V313M1014.5 270V313M1015.5 272V313M1016.5 272V314M1017.5 271V314M1018.5 270V280M1019.5 271V314M1020.5 293V314M1021.5 272V313M1022.5 269V313M1023.5 270V313M1024.5 270V282M1025.5 270V315M1026.5 269V315M1027.5 293V308M1028.5 273V313M1029.5 272V314M1030.5 272V311M1031.5 272V310M1032.5 272V311M1033.5 268V310M1034.5 268V312M1035.5 295V312M1036.5 268V312M1037.5 267V312M1038.5 269V312M1039.5 270V317M1040.5 270V316M1041.5 303V315M1042.5 269V314M1043.5 269V312M1044.5 270V312M1045.5 271V313M1046.5 271V314M1047.5 271V313M1048.5 269V313M1049.5 269V313M1050.5 270V280M1051.5 270V313M1052.5 267V313M1053.5 268V311M1054.5 267V311M1055.5 268V304M1056.5 271V311M1057.5 271V294M1058.5 269V318M1059.5 267V320M1060.5 265V322M1061.5 264V323M1062.5 263V321M1063.5 262V322M1064.5 260V323M1065.5 258V325M1066.5 253V329M1067.5 259V328M1068.5 256V331M1069.5 252V330M1070.5 251V286M1071.5 249V333M1072.5 249V334M1073.5 247V334M1074.5 248V328M1075.5 248V329M1076.5 269V334M1077.5 244V336M1078.5 247V336M1079.5 245V337M1080.5 247V332M1081.5 247V334M1082.5 256V337M1083.5 261V331M1084.5 240V338M1085.5 299V336M1086.5 241V282M1087.5 251V333M1088.5 250V332M1089.5 251V331M1090.5 251V330M1091.5 253V331M1092.5 249V290M1093.5 293V335M1094.5 250V335M1095.5 252V335M1096.5 253V324M1097.5 304V333M1098.5 252V332M1099.5 255V332M1100.5 256V330M1101.5 250V330M1102.5 250V321M1103.5 252V320M1104.5 252V320M1105.5 254V321M1106.5 253V320M1107.5 253V320M1108.5 259V320M1109.5 268V324M1110.5 259V322M1111.5 261V321M1112.5 265V315M1113.5 267V314M1114.5 268V292M1115.5 266V310M1116.5 270V309M1117.5 273V308M1118.5 275V307M1119.5 298V308M1120.5 275V308M1121.5 276V309M1122.5 275V308M1123.5 275V308M1124.5 275V308M1125.5 275V308M1126.5 275V308M1127.5 275V290M1128.5 274V308M1129.5 276V308M1130.5 276V308M1131.5 276V307M1132.5 276V308M1133.5 276V308M1134.5 274V307M1135.5 274V309M1136.5 274V309M1137.5 276V292M1138.5 276V309M1139.5 276V309M1140.5 276V306M1141.5 276V301M1142.5 295V306M1143.5 277V283M1144.5 299V306M1145.5 279V309M1146.5 280V308M1147.5 282V309M1148.5 280V308M1149.5 275V309M1150.5 300V306M1151.5 277V306M1152.5 276V306M1153.5 282V306M1154.5 277V307M1155.5 278V285M1156.5 276V307M1157.5 276V307M1158.5 276V307M1159.5 282V308M1160.5 276V287M1161.5 298V307M1162.5 279V307M1163.5 277V308M1164.5 298V305M1165.5 278V288M1166.5 276V305M1167.5 275V307M1168.5 275V308M1169.5 275V307M1170.5 276V307M1171.5 275V308M1172.5 279V305M1173.5 280V304M1174.5 280V305M1175.5 280V304M1176.5 280V301M1177.5 276V303" stroke="#d95319" stroke-opacity="0.78" stroke-width="1" fill="none"/><path d="M456.5 286V298M457.5 282V298M458.5 287V298M461.5 283V307M463.5 281V298M466.5 281V302M467.5 285V302M468.5 279V300M470.5 283V303M472.5 285V301M474.5 280V298M475.5 284V301M476.5 285V299M477.5 285V298M479.5 286V305M480.5 281V301M481.5 285V304M482.5 285V302M483.5 279V299M485.5 280V299M486.5 284V305M487.5 280V305M488.5 281V307M491.5 279V298M492.5 281V298M495.5 286V298M496.5 281V306M497.5 281V300M498.5 287V297M501.5 286V301M503.5 281V302M504.5 281V300M506.5 285V301M507.5 280V301M508.5 280V300M509.5 282V301M510.5 284V301M511.5 283V307M512.5 280V307M513.5 275V301M514.5 279V307M515.5 279V309M516.5 283V308M518.5 280V301M519.5 275V315M520.5 275V303M522.5 280V305M523.5 272V306M525.5 267V309M526.5 267V304M527.5 261V306M530.5 263V304M531.5 269V310M532.5 272V314M534.5 263V324M535.5 277V318M537.5 275V308M538.5 260V305M539.5 265V315M540.5 262V315M541.5 258V307M542.5 264V325M543.5 267V315M545.5 263V314M547.5 264V316M548.5 269V306M549.5 271V311M551.5 254V317M552.5 262V318M555.5 267V327M556.5 255V313M557.5 253V315M558.5 275V330M559.5 249V325M565.5 269V322M566.5 270V319M567.5 253V334M568.5 267V333M569.5 260V322M570.5 267V331M571.5 268V319M573.5 244V325M574.5 247V326M575.5 249V324M577.5 254V327M579.5 222V319M581.5 268V323M582.5 245V336M583.5 255V316M586.5 237V354M587.5 228V320M588.5 232V318M589.5 234V356M590.5 227V322M591.5 247V322M592.5 228V326M594.5 258V348M595.5 236V319M596.5 225V335M597.5 219V337M598.5 255V362M600.5 232V335M603.5 225V318M607.5 236V342M608.5 247V341M609.5 219V338M610.5 234V346M611.5 226V321M612.5 237V326M613.5 227V325M614.5 249V336M615.5 241V343M616.5 238V333M617.5 233V334M618.5 216V345M621.5 255V346M622.5 243V319M623.5 234V333M624.5 258V317M627.5 249V350M629.5 223V343M631.5 226V349M632.5 225V349M633.5 224V337M634.5 254V348M635.5 245V319M638.5 255V362M639.5 253V352M641.5 251V341M642.5 252V362M643.5 214V325M645.5 217V339M648.5 253V364M649.5 245V339M650.5 252V349M651.5 254V333M653.5 260V328M654.5 231V355M655.5 259V332M656.5 244V329M658.5 242V359M659.5 227V351M661.5 243V364M662.5 242V354M663.5 223V325M664.5 245V325M665.5 252V325M666.5 233V329M668.5 220V340M669.5 235V343M670.5 249V355M671.5 251V346M672.5 243V360M673.5 226V343M674.5 231V384M675.5 232V361M676.5 248V323M677.5 225V347M678.5 220V338M679.5 236V364M680.5 251V324M681.5 246V377M684.5 251V342M685.5 241V378M686.5 243V328M687.5 234V367M688.5 223V330M689.5 244V378M690.5 228V343M691.5 254V360M692.5 249V343M693.5 214V359M694.5 214V347M696.5 211V324M697.5 217V364M699.5 231V337M701.5 264V352M704.5 257V334M705.5 243V361M706.5 245V353M708.5 242V369M709.5 251V329M710.5 234V342M711.5 241V344M712.5 213V341M713.5 216V329M714.5 206V348M715.5 206V338M716.5 228V329M717.5 245V336M718.5 228V362M722.5 226V326M725.5 263V342M726.5 237V350M727.5 225V343M728.5 236V355M729.5 225V332M730.5 254V359M731.5 234V341M734.5 243V325M735.5 240V343M738.5 219V325M740.5 249V328M742.5 229V353M743.5 240V337M745.5 227V331M747.5 234V362M748.5 220V351M749.5 237V323M751.5 228V342M752.5 253V352M754.5 251V328M756.5 228V344M757.5 219V325M758.5 247V338M759.5 217V351M760.5 228V342M761.5 220V347M762.5 250V323M763.5 238V357M765.5 226V324M767.5 259V337M768.5 253V338M769.5 251V325M770.5 247V323M772.5 244V322M774.5 247V319M775.5 276V318M776.5 241V343M777.5 254V319M778.5 267V330M779.5 240V325M780.5 261V346M781.5 244V339M782.5 253V324M787.5 242V323M788.5 249V310M789.5 266V334M792.5 240V317M793.5 255V325M797.5 266V320M798.5 269V315M800.5 262V340M801.5 256V323M802.5 272V312M806.5 275V333M807.5 245V335M809.5 266V315M810.5 252V322M811.5 259V322M812.5 274V332M814.5 273V315M815.5 268V332M817.5 261V334M818.5 257V310M819.5 275V319M820.5 259V317M821.5 253V328M824.5 265V310M826.5 262V335M827.5 275V324M828.5 258V322M829.5 262V324M830.5 269V313M831.5 277V317M834.5 280V322M835.5 260V308M836.5 276V320M837.5 268V309M838.5 276V327M840.5 265V324M841.5 263V310M842.5 270V315M845.5 262V316M848.5 276V314M849.5 278V327M853.5 258V318M855.5 274V319M858.5 261V314M860.5 266V307M866.5 272V305M869.5 263V303M870.5 260V307M871.5 269V308M872.5 277V315M874.5 275V303M875.5 280V313M876.5 273V302M877.5 279V310M879.5 274V300M880.5 280V306M881.5 277V305M882.5 282V299M884.5 276V309M885.5 273V300M886.5 274V308M888.5 279V304M889.5 281V299M890.5 284V303M893.5 269V301M895.5 273V303M896.5 272V304M897.5 282V303M898.5 273V304M899.5 274V299M905.5 273V300M906.5 280V303M907.5 285V298M908.5 280V310M909.5 282V310M911.5 274V302M912.5 277V305M915.5 283V305M916.5 284V301M918.5 278V302M919.5 278V306M920.5 282V304M923.5 279V304M925.5 272V304M926.5 279V305M927.5 281V302M928.5 279V307M930.5 281V299M931.5 280V306M932.5 281V308M933.5 286V305M934.5 277V300M935.5 280V301M936.5 283V307M938.5 278V300M939.5 284V302M940.5 280V301M942.5 277V299M943.5 281V298M944.5 277V308M946.5 284V300M949.5 282V306M951.5 283V300M952.5 282V299M953.5 282V298M955.5 285V303M956.5 283V304M958.5 281V298M960.5 280V299M963.5 277V300M965.5 281V299M966.5 279V299M967.5 274V304M970.5 283V308M971.5 276V300M973.5 276V305M974.5 284V304M975.5 277V298M976.5 278V308M977.5 284V299M978.5 282V301M979.5 280V300M980.5 285V301M981.5 282V299M982.5 273V303M983.5 281V303M984.5 275V303M985.5 280V304M987.5 277V300M988.5 275V298M990.5 281V298M992.5 279V303M993.5 277V304M995.5 282V302M996.5 283V300M997.5 283V308M999.5 282V302M1000.5 282V302M1001.5 275V299M1002.5 280V310M1003.5 283V307M1004.5 280V308M1005.5 282V303M1007.5 277V306M1008.5 285V301M1009.5 278V304M1012.5 280V301M1014.5 276V304M1015.5 282V304M1016.5 276V301M1017.5 279V307M1019.5 283V300M1021.5 283V305M1022.5 275V306M1023.5 281V299M1026.5 283V309M1028.5 284V309M1029.5 281V299M1030.5 284V303M1031.5 279V301M1032.5 281V299M1034.5 279V302M1036.5 279V306M1038.5 274V301M1039.5 279V302M1040.5 283V308M1042.5 276V307M1043.5 279V297M1044.5 280V304M1046.5 278V310M1047.5 275V308M1048.5 283V301M1049.5 274V301M1051.5 278V304M1052.5 279V305M1053.5 279V304M1055.5 275V299M1056.5 280V304M1058.5 283V299M1060.5 280V305M1061.5 280V309M1063.5 276V306M1064.5 272V316M1066.5 261V309M1067.5 271V320M1068.5 265V310M1069.5 269V318M1071.5 260V307M1072.5 264V312M1073.5 269V309M1075.5 262V311M1076.5 273V323M1077.5 258V318M1079.5 272V310M1080.5 278V311M1081.5 273V321M1082.5 268V321M1083.5 280V322M1087.5 262V309M1088.5 276V306M1089.5 262V315M1091.5 275V321M1096.5 268V309M1099.5 267V307M1100.5 278V321M1101.5 264V305M1102.5 263V314M1103.5 263V313M1104.5 262V301M1106.5 262V304M1107.5 279V309M1108.5 280V313M1109.5 278V306M1110.5 281V302M1111.5 274V314M1112.5 279V308M1113.5 275V302M1115.5 280V302M1117.5 277V299M1118.5 284V302M1120.5 285V302M1121.5 279V298M1122.5 281V302M1123.5 286V298M1124.5 284V299M1125.5 280V303M1126.5 285V298M1128.5 284V303M1129.5 285V301M1130.5 283V297M1131.5 283V297M1132.5 280V303M1133.5 283V297M1134.5 277V297M1135.5 282V297M1136.5 282V298M1138.5 283V299M1145.5 285V298M1146.5 284V296M1147.5 288V300M1148.5 287V296M1149.5 284V300M1151.5 282V296M1152.5 280V301M1153.5 286V300M1154.5 281V303M1156.5 283V302M1157.5 282V302M1158.5 281V301M1159.5 284V298M1162.5 287V298M1163.5 285V303M1167.5 284V300M1169.5 283V303M1170.5 279V296M1171.5 283V302M1174.5 284V302M1176.5 283V295M1177.5 284V297" stroke="#d95319" stroke-opacity="0.5" stroke-width="1" fill="none"/><path d="M456.5 278V309M457.5 277V305M458.5 277V305M459.5 277V299M460.5 276V303M461.5 276V307M462.5 275V306M463.5 281V307M464.5 278V302M465.5 289V309M466.5 277V304M467.5 278V310M468.5 274V311M469.5 269V310M470.5 299V312M471.5 264V312M472.5 261V313M473.5 259V315M474.5 256V319M475.5 253V320M476.5 250V322M477.5 248V326M478.5 247V328M479.5 245V329M480.5 245V317M481.5 243V284M482.5 248V331M483.5 247V334M484.5 234V332M485.5 232V335M486.5 229V335M487.5 230V336M488.5 228V333M489.5 227V346M490.5 225V348M491.5 223V349M492.5 222V350M493.5 228V339M494.5 225V330M495.5 225V343M496.5 221V344M497.5 230V355M498.5 215V359M499.5 215V361M500.5 215V339M501.5 213V351M502.5 230V352M503.5 218V354M504.5 214V353M505.5 209V358M506.5 227V356M507.5 226V354M508.5 225V339M509.5 225V338M510.5 226V356M511.5 219V333M512.5 216V353M513.5 309V354M514.5 234V341M515.5 217V346M516.5 218V368M517.5 311V370M518.5 217V368M519.5 216V371M520.5 243V362M521.5 242V364M522.5 213V362M523.5 214V362M524.5 214V372M525.5 216V362M526.5 218V361M527.5 216V361M528.5 218V360M529.5 218V367M530.5 211V366M531.5 241V272M532.5 209V358M533.5 220V358M534.5 218V359M535.5 220V357M536.5 220V356M537.5 214V358M538.5 214V358M539.5 228V355M540.5 215V334M541.5 208V362M542.5 219V361M543.5 229V341M544.5 229V363M545.5 283V336M546.5 250V356M547.5 208V358M548.5 210V357M549.5 209V363M550.5 208V365M551.5 216V355M552.5 215V345M553.5 217V355M554.5 206V356M555.5 207V359M556.5 209V377M557.5 206V267M558.5 205V372M559.5 217V338M560.5 217V373M561.5 201V362M562.5 204V366M563.5 205V366M564.5 317V372M565.5 205V282M566.5 208V372M567.5 208V372M568.5 208V269M569.5 243V375M570.5 230V370M571.5 205V371M572.5 204V370M573.5 205V370M574.5 207V370M575.5 207V367M576.5 203V369M577.5 201V364M578.5 204V365M579.5 200V367M580.5 215V368M581.5 213V366M582.5 213V364M583.5 214V369M584.5 213V370M585.5 209V366M586.5 208V367M587.5 207V282M588.5 210V367M589.5 209V366M590.5 254V367M591.5 227V378M592.5 226V374M593.5 225V374M594.5 226V371M595.5 221V374M596.5 220V365M597.5 222V365M598.5 220V366M599.5 211V366M600.5 211V366M601.5 208V369M602.5 209V368M603.5 226V373M604.5 226V376M605.5 246V381M606.5 214V380M607.5 215V378M608.5 215V329M609.5 204V358M610.5 204V357M611.5 202V368M612.5 198V366M613.5 200V366M614.5 203V263M615.5 200V350M616.5 206V366M617.5 203V370M618.5 203V367M619.5 205V361M620.5 206V361M621.5 216V252M622.5 218V375M623.5 229V382M624.5 245V385M625.5 216V387M626.5 208V257M627.5 238V363M628.5 208V352M629.5 208V363M630.5 204V266M631.5 201V334M632.5 201V388M633.5 204V385M634.5 204V283M635.5 201V365M636.5 237V363M637.5 199V364M638.5 200V272M639.5 201V377M640.5 247V377M641.5 248V378M642.5 223V377M643.5 221V376M644.5 213V380M645.5 202V362M646.5 202V360M647.5 219V361M648.5 219V261M649.5 219V379M650.5 222V378M651.5 213V381M652.5 210V377M653.5 327V378M654.5 212V367M655.5 211V366M656.5 202V365M657.5 203V374M658.5 238V374M659.5 219V377M660.5 221V373M661.5 221V374M662.5 207V364M663.5 210V290M664.5 210V366M665.5 207V362M666.5 215V362M667.5 216V367M668.5 214V381M669.5 217V378M670.5 226V378M671.5 248V372M672.5 240V373M673.5 227V369M674.5 228V368M675.5 216V372M676.5 214V365M677.5 216V364M678.5 215V366M679.5 214V367M680.5 217V355M681.5 242V376M682.5 248V379M683.5 215V375M684.5 216V305M685.5 212V364M686.5 225V364M687.5 214V381M688.5 215V381M689.5 215V380M690.5 216V380M691.5 306V378M692.5 206V378M693.5 208V379M694.5 328V366M695.5 239V380M696.5 239V371M697.5 210V373M698.5 210V371M699.5 209V380M700.5 204V375M701.5 204V377M702.5 200V376M703.5 202V345M704.5 204V369M705.5 207V377M706.5 210V381M707.5 241V355M708.5 213V379M709.5 217V380M710.5 218V341M711.5 225V369M712.5 224V374M713.5 243V336M714.5 211V373M715.5 224V373M716.5 215V372M717.5 217V360M718.5 217V358M719.5 302V343M720.5 220V361M721.5 241V363M722.5 225V354M723.5 306V349M724.5 223V379M725.5 223V375M726.5 222V376M727.5 223V376M728.5 222V336M729.5 224V357M730.5 235V365M731.5 236V365M732.5 234V367M733.5 214V270M734.5 245V366M735.5 306V362M736.5 225V362M737.5 225V344M738.5 227V356M739.5 306V352M740.5 236V354M741.5 236V351M742.5 252V353M743.5 322V355M744.5 294V366M745.5 226V342M746.5 250V362M747.5 231V359M748.5 242V359M749.5 225V343M750.5 226V361M751.5 225V355M752.5 234V357M753.5 232V357M754.5 240V356M755.5 242V355M756.5 235V360M757.5 237V359M758.5 236V342M759.5 229V342M760.5 230V340M761.5 229V264M762.5 230V344M763.5 235V345M764.5 307V342M765.5 223V342M766.5 224V343M767.5 249V350M768.5 226V350M769.5 292V350M770.5 227V348M771.5 224V348M772.5 225V347M773.5 228V345M774.5 230V339M775.5 229V272M776.5 240V342M777.5 231V347M778.5 233V345M779.5 234V344M780.5 235V335M781.5 227V334M782.5 229V333M783.5 228V333M784.5 236V334M785.5 237V338M786.5 235V330M787.5 239V330M788.5 236V330M789.5 240V340M790.5 240V340M791.5 244V340M792.5 245V339M793.5 244V333M794.5 245V317M795.5 246V334M796.5 239V326M797.5 239V333M798.5 241V327M799.5 238V331M800.5 239V326M801.5 239V325M802.5 239V325M803.5 240V265M804.5 260V324M805.5 241V325M806.5 239V325M807.5 238V263M808.5 238V324M809.5 239V330M810.5 240V329M811.5 238V328M812.5 248V330M813.5 248V279M814.5 249V330M815.5 244V315M816.5 246V322M817.5 246V322M818.5 258V320M819.5 257V321M820.5 257V320M821.5 257V325M822.5 257V321M823.5 256V326M824.5 311V325M825.5 254V317M826.5 264V324M827.5 254V327M828.5 258V326M829.5 258V325M830.5 260V325M831.5 259V325M832.5 254V327M833.5 245V318M834.5 247V318M835.5 253V308M836.5 261V318M837.5 254V323M838.5 254V324M839.5 254V314M840.5 256V310M841.5 250V324M842.5 251V325M843.5 252V326M844.5 251V325M845.5 300V325M846.5 255V318M847.5 266V286M848.5 263V328M849.5 253V327M850.5 267V323M851.5 257V323M852.5 305V323M853.5 258V324M854.5 258V316M855.5 253V326M856.5 257V318M857.5 256V319M858.5 255V318M859.5 256V311M860.5 257V319M861.5 253V319M862.5 254V319M863.5 257V319M864.5 258V310M865.5 258V322M866.5 263V321M867.5 269V321M868.5 263V321M869.5 264V316M870.5 265V317M871.5 263V317M872.5 271V295M873.5 263V321M874.5 269V321M875.5 263V321M876.5 264V321M877.5 264V321M878.5 259V322M879.5 259V321M880.5 259V325M881.5 258V326M882.5 259V316M883.5 258V325M884.5 273V319M885.5 258V321M886.5 269V320M887.5 259V320M888.5 258V320M889.5 262V325M890.5 260V324M891.5 261V324M892.5 261V315M893.5 261V309M894.5 261V316M895.5 261V320M896.5 261V320M897.5 308V321M898.5 262V320M899.5 262V320M900.5 263V319M901.5 259V318M902.5 259V318M903.5 258V276M904.5 258V320M905.5 261V319M906.5 261V320M907.5 262V321M908.5 262V279M909.5 258V320M910.5 259V284M911.5 259V325M912.5 258V325M913.5 259V327M914.5 264V326M915.5 265V325M916.5 268V317M917.5 270V323M918.5 264V324M919.5 266V325M920.5 266V325M921.5 266V323M922.5 309V322M923.5 259V318M924.5 263V322M925.5 262V323M926.5 262V318M927.5 258V315M928.5 259V319M929.5 257V319M930.5 267V318M931.5 266V322M932.5 259V321M933.5 259V324M934.5 259V323M935.5 271V323M936.5 295V323M937.5 262V323M938.5 272V322M939.5 262V322M940.5 269V323M941.5 275V322M942.5 277V320M943.5 262V321M944.5 262V282M945.5 262V327M946.5 270V326M947.5 263V291M948.5 271V323M949.5 269V322M950.5 261V323M951.5 266V322M952.5 304V322M953.5 262V321M954.5 263V320M955.5 261V321M956.5 262V321M957.5 259V273M958.5 266V324M959.5 263V321M960.5 263V321M961.5 286V321M962.5 257V296M963.5 257V321M964.5 297V324M965.5 257V285M966.5 258V326M967.5 258V324M968.5 254V327M969.5 291V327M970.5 253V328M971.5 253V323M972.5 254V324M973.5 256V280M974.5 255V322M975.5 260V321M976.5 260V327M977.5 261V326M978.5 261V278M979.5 261V327M980.5 261V327M981.5 261V329M982.5 262V329M983.5 262V328M984.5 260V274M985.5 253V323M986.5 253V327M987.5 253V326M988.5 252V326M989.5 251V325M990.5 253V323M991.5 300V323M992.5 252V323M993.5 254V330M994.5 255V325M995.5 285V330M996.5 256V329M997.5 255V333M998.5 254V334M999.5 254V334M1000.5 252V335M1001.5 252V328M1002.5 252V327M1003.5 253V327M1004.5 261V327M1005.5 259V333M1006.5 266V334M1007.5 259V332M1008.5 258V334M1009.5 311V336M1010.5 298V337M1011.5 259V337M1012.5 261V338M1013.5 261V289M1014.5 262V279M1015.5 261V332M1016.5 269V332M1017.5 253V339M1018.5 253V341M1019.5 252V341M1020.5 261V340M1021.5 259V336M1022.5 310V337M1023.5 260V336M1024.5 260V336M1025.5 261V336M1026.5 260V273M1027.5 271V338M1028.5 263V338M1029.5 259V336M1030.5 258V342M1031.5 257V342M1032.5 256V344M1033.5 257V317M1034.5 257V329M1035.5 302V316M1036.5 268V336M1037.5 259V335M1038.5 260V317M1039.5 262V332M1040.5 264V289M1041.5 265V329M1042.5 266V329M1043.5 276V337M1044.5 267V335M1045.5 261V333M1046.5 265V331M1047.5 262V331M1048.5 267V325M1049.5 267V323M1050.5 268V322M1051.5 269V321M1052.5 268V316M1053.5 268V324M1054.5 277V323M1055.5 270V322M1056.5 273V322M1057.5 277V322M1058.5 273V321M1059.5 273V320M1060.5 271V320M1061.5 270V319M1062.5 274V320M1063.5 269V318M1064.5 278V320M1065.5 274V316M1066.5 271V317M1067.5 271V317M1068.5 275V316M1069.5 277V317M1070.5 272V319M1071.5 271V319M1072.5 272V319M1073.5 271V309M1074.5 271V315M1075.5 272V315M1076.5 273V317M1077.5 273V317M1078.5 274V320M1079.5 274V319M1080.5 274V316M1081.5 273V307M1082.5 296V306M1083.5 277V313M1084.5 277V318M1085.5 271V313M1086.5 271V313M1087.5 271V312M1088.5 275V308M1089.5 274V313M1090.5 274V312M1091.5 279V312M1092.5 289V315M1093.5 271V315M1094.5 271V310M1095.5 277V311M1096.5 273V288M1097.5 278V312M1098.5 273V311M1099.5 272V312M1100.5 273V311M1101.5 273V311M1102.5 274V312M1103.5 274V312M1104.5 274V314M1105.5 275V313M1106.5 275V312M1107.5 274V311M1108.5 277V311M1109.5 277V312M1110.5 273V312M1111.5 272V310M1112.5 275V310M1113.5 273V311M1114.5 291V304M1115.5 274V316M1116.5 273V313M1117.5 279V313M1118.5 274V311M1119.5 294V311M1120.5 275V286M1121.5 275V310M1122.5 279V312M1123.5 275V305M1124.5 275V312M1125.5 299V308M1126.5 280V306M1127.5 279V313M1128.5 274V313M1129.5 277V313M1130.5 274V309M1131.5 274V313" stroke="#edb120" stroke-opacity="0.82" stroke-width="1" fill="none"/><path d="M456.5 280V303M457.5 282V299M458.5 280V299M464.5 283V295M467.5 284V304M469.5 281V304M472.5 280V300M473.5 278V299M474.5 264V303M475.5 273V310M476.5 262V301M477.5 267V310M479.5 271V304M480.5 264V304M482.5 278V312M483.5 261V317M484.5 271V315M485.5 263V307M487.5 259V305M488.5 250V318M491.5 243V318M492.5 240V335M493.5 265V316M495.5 254V325M496.5 260V319M497.5 265V323M498.5 263V318M499.5 242V321M500.5 246V307M501.5 259V327M502.5 258V336M503.5 248V310M504.5 252V316M505.5 232V344M506.5 257V325M508.5 265V324M509.5 244V311M511.5 269V312M512.5 243V337M514.5 247V319M515.5 258V331M516.5 239V319M518.5 251V352M519.5 265V329M520.5 263V338M521.5 268V343M522.5 247V341M523.5 255V321M524.5 249V323M525.5 247V341M526.5 250V316M527.5 246V325M528.5 238V340M529.5 268V322M530.5 251V346M534.5 243V314M535.5 264V329M536.5 260V315M538.5 265V337M539.5 242V313M540.5 259V317M541.5 240V319M542.5 249V319M544.5 253V328M546.5 260V341M547.5 259V341M548.5 266V334M549.5 253V347M550.5 253V324M551.5 234V341M552.5 246V322M554.5 231V322M556.5 246V349M558.5 232V355M559.5 238V309M560.5 258V349M562.5 244V336M563.5 238V315M566.5 238V353M567.5 230V340M569.5 267V339M570.5 266V354M571.5 248V335M574.5 260V342M575.5 253V319M576.5 253V347M577.5 222V345M579.5 260V324M580.5 253V333M581.5 257V314M582.5 237V326M583.5 237V339M584.5 258V321M585.5 240V346M586.5 235V337M588.5 262V331M589.5 237V326M590.5 275V328M591.5 258V329M593.5 268V336M594.5 270V323M595.5 266V317M596.5 241V336M597.5 264V334M600.5 244V328M601.5 260V338M602.5 260V350M603.5 260V324M604.5 250V319M606.5 240V328M607.5 230V337M608.5 245V321M610.5 262V340M611.5 223V346M612.5 231V334M613.5 258V315M616.5 249V334M617.5 251V337M620.5 253V337M622.5 261V356M624.5 263V331M625.5 259V338M627.5 266V324M628.5 242V337M629.5 238V332M631.5 241V311M632.5 235V326M635.5 247V341M636.5 269V321M637.5 238V348M639.5 235V338M641.5 274V340M642.5 266V347M643.5 269V320M647.5 234V343M650.5 251V334M652.5 255V320M654.5 232V343M655.5 262V338M657.5 251V349M659.5 269V329M662.5 241V315M664.5 253V324M666.5 246V325M667.5 250V341M669.5 243V350M670.5 262V336M671.5 262V323M672.5 267V333M673.5 248V352M675.5 264V326M676.5 257V323M677.5 247V328M680.5 243V334M681.5 266V328M682.5 258V356M683.5 251V347M685.5 255V327M686.5 259V315M688.5 245V321M689.5 267V333M693.5 260V340M695.5 257V345M696.5 257V317M697.5 250V356M698.5 255V347M700.5 231V335M702.5 222V320M703.5 259V332M704.5 243V335M705.5 258V357M706.5 239V322M707.5 273V312M710.5 262V307M711.5 249V328M713.5 258V312M715.5 248V329M716.5 250V316M717.5 258V346M718.5 248V340M721.5 272V324M724.5 256V350M725.5 270V346M727.5 244V318M730.5 270V323M732.5 266V345M734.5 267V325M736.5 256V320M738.5 246V331M740.5 266V326M741.5 252V323M742.5 277V320M747.5 250V345M748.5 263V342M749.5 261V311M752.5 267V320M754.5 255V331M755.5 267V323M756.5 260V330M757.5 262V341M759.5 259V322M760.5 261V321M762.5 251V332M763.5 256V314M765.5 245V318M766.5 261V332M767.5 275V337M768.5 248V324M770.5 258V311M771.5 269V308M772.5 239V318M773.5 267V318M774.5 244V313M776.5 252V324M778.5 245V333M779.5 258V329M780.5 247V310M781.5 259V314M782.5 263V308M784.5 259V316M786.5 269V313M787.5 264V319M788.5 271V309M789.5 272V316M790.5 257V320M791.5 276V326M792.5 263V310M794.5 274V305M795.5 269V316M796.5 259V312M797.5 270V320M798.5 267V317M799.5 254V308M801.5 274V302M802.5 259V314M804.5 268V301M806.5 255V310M808.5 254V311M810.5 272V303M811.5 260V308M812.5 271V322M814.5 277V311M815.5 269V309M816.5 273V305M817.5 258V303M818.5 278V305M819.5 267V308M820.5 264V308M821.5 279V306M822.5 272V311M823.5 273V311M825.5 267V307M826.5 277V307M828.5 279V304M829.5 277V316M831.5 273V309M832.5 263V309M834.5 257V310M835.5 271V304M836.5 271V305M837.5 268V310M838.5 263V305M840.5 269V301M841.5 269V308M844.5 264V311M846.5 266V307M848.5 273V303M849.5 279V309M850.5 275V312M851.5 277V311M854.5 267V309M855.5 263V309M857.5 277V304M858.5 275V312M859.5 274V300M860.5 267V306M861.5 264V312M862.5 278V309M863.5 269V310M864.5 271V300M865.5 266V302M866.5 270V310M868.5 279V304M869.5 276V306M870.5 274V306M871.5 281V308M873.5 273V314M874.5 278V310M875.5 282V308M876.5 278V300M877.5 276V306M879.5 280V303M880.5 269V306M881.5 278V308M882.5 277V309M883.5 272V314M884.5 278V306M885.5 268V314M886.5 283V305M887.5 274V300M888.5 272V312M889.5 278V316M890.5 280V305M891.5 280V313M892.5 273V307M893.5 268V300M894.5 282V304M895.5 274V310M896.5 268V306M898.5 279V313M899.5 273V312M900.5 275V311M901.5 270V309M902.5 274V305M904.5 275V303M905.5 281V307M906.5 273V308M907.5 280V310M909.5 268V309M911.5 279V315M914.5 273V308M916.5 275V305M917.5 280V308M918.5 278V314M919.5 281V312M920.5 274V308M921.5 272V312M925.5 279V305M927.5 265V309M929.5 269V309M930.5 283V308M932.5 281V302M933.5 269V315M934.5 270V302M935.5 278V312M937.5 272V313M938.5 278V302M940.5 274V309M941.5 284V302M942.5 285V305M943.5 273V311M945.5 274V304M946.5 278V315M949.5 279V313M950.5 281V312M951.5 279V301M954.5 282V311M955.5 269V305M956.5 268V307M958.5 277V307M959.5 270V303M960.5 274V310M966.5 269V317M967.5 277V303M970.5 267V312M971.5 279V305M974.5 279V315M975.5 272V307M976.5 280V308M977.5 274V310M981.5 281V305M982.5 281V303M985.5 275V306M986.5 267V304M987.5 264V318M989.5 273V307M990.5 270V316M993.5 277V320M996.5 268V308M997.5 270V314M998.5 272V320M1001.5 262V306M1002.5 279V317M1003.5 262V316M1004.5 273V306M1006.5 276V322M1007.5 278V323M1012.5 276V319M1015.5 273V322M1016.5 277V317M1017.5 279V322M1018.5 276V323M1019.5 278V310M1020.5 280V317M1021.5 276V323M1023.5 268V319M1024.5 271V321M1025.5 280V313M1027.5 282V312M1028.5 280V317M1033.5 268V300M1034.5 272V313M1036.5 283V323M1037.5 277V313M1038.5 272V304M1039.5 278V314M1041.5 277V319M1042.5 282V314M1044.5 282V321M1045.5 279V324M1047.5 282V316M1048.5 273V316M1049.5 277V313M1050.5 283V316M1051.5 277V310M1052.5 274V306M1054.5 282V311M1055.5 277V307M1057.5 280V305M1058.5 284V313M1060.5 278V301M1062.5 278V308M1063.5 282V305M1065.5 281V302M1066.5 279V302M1068.5 283V305M1070.5 280V305M1071.5 282V308M1072.5 276V303M1073.5 284V303M1074.5 285V310M1075.5 282V307M1076.5 278V307M1077.5 284V307M1078.5 279V314M1079.5 279V312M1080.5 284V308M1081.5 278V299M1083.5 284V304M1085.5 282V306M1086.5 277V302M1087.5 279V303M1089.5 279V299M1090.5 278V301M1093.5 281V303M1095.5 286V305M1097.5 282V300M1098.5 284V306M1099.5 277V304M1100.5 283V298M1101.5 279V303M1102.5 285V306M1103.5 285V307M1104.5 281V308M1105.5 284V304M1106.5 286V302M1107.5 281V305M1108.5 282V300M1109.5 285V306M1110.5 282V305M1112.5 285V303M1113.5 282V302M1115.5 284V305M1117.5 284V306M1118.5 285V306M1121.5 285V302M1122.5 287V303M1124.5 278V308M1126.5 284V301M1127.5 286V307M1128.5 278V305M1129.5 284V304M1130.5 282V297" stroke="#edb120" stroke-opacity="0.5" stroke-width="1" fill="none"/><path d="M456.5 281V307M457.5 281V307M458.5 281V302M459.5 282V308M460.5 285V310M461.5 279V306M462.5 274V310M463.5 274V310M464.5 274V310M465.5 274V308M466.5 274V301M467.5 273V306M468.5 274V310M469.5 276V309M470.5 273V310M471.5 275V288M472.5 277V305M473.5 276V304M474.5 279V311M475.5 276V312M476.5 276V309M477.5 281V311M478.5 277V311M479.5 276V307M480.5 276V306M481.5 274V306M482.5 276V307M483.5 276V312M484.5 275V311M485.5 281V312M486.5 275V311M487.5 274V306M488.5 278V306M489.5 273V306M490.5 292V306M491.5 274V312M492.5 280V312M493.5 288V309M494.5 275V302M495.5 301V313M496.5 276V309M497.5 278V308M498.5 294V309M499.5 282V309M500.5 275V308M501.5 275V309M502.5 271V309M503.5 271V312M504.5 264V315M505.5 260V322M506.5 255V326M507.5 251V313M508.5 264V331M509.5 244V333M510.5 241V333M511.5 241V333M512.5 239V334M513.5 262V327M514.5 254V339M515.5 249V339M516.5 236V330M517.5 236V342M518.5 234V344M519.5 230V342M520.5 242V343M521.5 252V334M522.5 231V345M523.5 230V345M524.5 226V344M525.5 234V345M526.5 223V347M527.5 229V350M528.5 231V351M529.5 231V355M530.5 232V355M531.5 242V330M532.5 232V361M533.5 232V363M534.5 231V363M535.5 253V366M536.5 226V365M537.5 226V349M538.5 223V351M539.5 214V331M540.5 214V354M541.5 217V342M542.5 217V355M543.5 221V353M544.5 220V362M545.5 217V361M546.5 219V355M547.5 227V349M548.5 220V358M549.5 219V358M550.5 305V360M551.5 236V349M552.5 225V349M553.5 226V348M554.5 221V349M555.5 211V342M556.5 211V359M557.5 210V360M558.5 221V360M559.5 219V359M560.5 222V362M561.5 241V354M562.5 221V263M563.5 223V269M564.5 222V359M565.5 299V362M566.5 212V361M567.5 215V365M568.5 213V369M569.5 212V369M570.5 217V369M571.5 224V366M572.5 223V358M573.5 224V361M574.5 223V360M575.5 221V367M576.5 228V368M577.5 214V368M578.5 216V368M579.5 224V368M580.5 216V359M581.5 213V367M582.5 285V347M583.5 233V347M584.5 238V348M585.5 242V351M586.5 260V275M587.5 242V352M588.5 242V341M589.5 259V274M590.5 229V360M591.5 228V360M592.5 230V358M593.5 229V357M594.5 226V371M595.5 224V355M596.5 223V275M597.5 223V368M598.5 222V364M599.5 222V335M600.5 221V366M601.5 222V355M602.5 224V357M603.5 228V369M604.5 248V345M605.5 221V366M606.5 220V367M607.5 219V335M608.5 219V248M609.5 240V366M610.5 219V365M611.5 240V369M612.5 220V370M613.5 220V367M614.5 218V369M615.5 237V294M616.5 217V354M617.5 216V370M618.5 238V362M619.5 217V333M620.5 215V365M621.5 233V362M622.5 243V360M623.5 239V361M624.5 232V272M625.5 234V358M626.5 210V353M627.5 222V353M628.5 208V351M629.5 209V353M630.5 221V353M631.5 233V260M632.5 253V359M633.5 226V360M634.5 227V358M635.5 239V360M636.5 225V341M637.5 227V345M638.5 227V368M639.5 228V366M640.5 255V366M641.5 229V349M642.5 220V357M643.5 220V350M644.5 223V324M645.5 223V364M646.5 218V334M647.5 211V368M648.5 232V368M649.5 208V264M650.5 298V367M651.5 215V366M652.5 216V361M653.5 209V362M654.5 211V292M655.5 209V362M656.5 210V361M657.5 251V364M658.5 223V365M659.5 225V365M660.5 221V362M661.5 233V367M662.5 221V352M663.5 296V333M664.5 253V336M665.5 222V356M666.5 221V357M667.5 211V360M668.5 228V370M669.5 217V344M670.5 246V355M671.5 221V336M672.5 221V358M673.5 229V358M674.5 227V359M675.5 228V357M676.5 229V355M677.5 225V358M678.5 208V356M679.5 230V345M680.5 248V345M681.5 225V346M682.5 225V354M683.5 225V354M684.5 225V353M685.5 216V354M686.5 214V351M687.5 213V351M688.5 215V359M689.5 213V360M690.5 221V358M691.5 219V358M692.5 219V360M693.5 315V359M694.5 220V359M695.5 221V358M696.5 221V355M697.5 238V354M698.5 239V356M699.5 305V361M700.5 229V359M701.5 211V362M702.5 213V346M703.5 213V365M704.5 225V362M705.5 242V363M706.5 227V360M707.5 226V358M708.5 228V341M709.5 225V363M710.5 212V353M711.5 243V342M712.5 212V362M713.5 215V362M714.5 212V361M715.5 247V346M716.5 219V363M717.5 218V349M718.5 219V361M719.5 218V337M720.5 220V362M721.5 222V356M722.5 293V334M723.5 229V357M724.5 229V329M725.5 227V350M726.5 229V346M727.5 243V347M728.5 242V326M729.5 218V348M730.5 249V345M731.5 254V344M732.5 225V334M733.5 227V327M734.5 227V356M735.5 230V343M736.5 230V342M737.5 219V342M738.5 222V349M739.5 220V349M740.5 222V349M741.5 223V347M742.5 230V349M743.5 229V346M744.5 239V346M745.5 253V298M746.5 312V343M747.5 226V352M748.5 227V353M749.5 231V331M750.5 233V345M751.5 259V346M752.5 233V332M753.5 229V322M754.5 311V345M755.5 226V340M756.5 227V340M757.5 226V339M758.5 246V326M759.5 226V326M760.5 299V341M761.5 236V342M762.5 230V349M763.5 240V349M764.5 234V348M765.5 252V339M766.5 236V340M767.5 235V339M768.5 242V319M769.5 258V340M770.5 241V338M771.5 262V336M772.5 243V335M773.5 289V335M774.5 245V335M775.5 264V335M776.5 246V334M777.5 246V318M778.5 241V329M779.5 256V345M780.5 243V343M781.5 243V344M782.5 305V327M783.5 239V328M784.5 241V327M785.5 240V329M786.5 244V328M787.5 249V332M788.5 265V332M789.5 249V330M790.5 258V330M791.5 266V334M792.5 265V334M793.5 260V333M794.5 264V332M795.5 255V325M796.5 269V324M797.5 256V324M798.5 249V324M799.5 267V332M800.5 250V331M801.5 249V332M802.5 261V331M803.5 262V326M804.5 247V326M805.5 249V326M806.5 261V326M807.5 253V335M808.5 252V334M809.5 254V335M810.5 254V333M811.5 254V327M812.5 253V326M813.5 253V274M814.5 254V326M815.5 270V312M816.5 255V317M817.5 253V316M818.5 255V316M819.5 265V326M820.5 252V329M821.5 253V327M822.5 267V325M823.5 251V327M824.5 250V324M825.5 252V322M826.5 251V322M827.5 252V313M828.5 252V321M829.5 253V323M830.5 254V324M831.5 266V321M832.5 252V321M833.5 267V321M834.5 269V321M835.5 257V321M836.5 257V326M837.5 266V285M838.5 267V326M839.5 267V326M840.5 266V312M841.5 266V311M842.5 303V320M843.5 254V320M844.5 255V324M845.5 255V323M846.5 255V323M847.5 256V317M848.5 256V316M849.5 257V317M850.5 262V320M851.5 271V320M852.5 260V312M853.5 271V320M854.5 262V319M855.5 256V321M856.5 256V315M857.5 260V318M858.5 260V314M859.5 262V314M860.5 262V307M861.5 263V314M862.5 262V314M863.5 255V320M864.5 267V320M865.5 272V322M866.5 257V320M867.5 257V320M868.5 272V323M869.5 269V323M870.5 274V318M871.5 269V306M872.5 269V318M873.5 269V319M874.5 259V319M875.5 259V318M876.5 258V321M877.5 303V322M878.5 261V277M879.5 261V320M880.5 262V324M881.5 262V323M882.5 266V310M883.5 266V323M884.5 266V320M885.5 267V321M886.5 263V320M887.5 262V314M888.5 262V317M889.5 265V321M890.5 264V322M891.5 276V323M892.5 265V309M893.5 264V319M894.5 267V318M895.5 264V317M896.5 259V310M897.5 259V320M898.5 270V318M899.5 271V319M900.5 271V318M901.5 267V318M902.5 268V322M903.5 271V321M904.5 262V321M905.5 263V322M906.5 273V320M907.5 263V313M908.5 263V311M909.5 262V321M910.5 274V322M911.5 262V321M912.5 268V318M913.5 269V311M914.5 266V317M915.5 265V311M916.5 266V311M917.5 266V311M918.5 263V312M919.5 265V319M920.5 261V317M921.5 261V317M922.5 262V317M923.5 267V317M924.5 273V320M925.5 261V320M926.5 261V321M927.5 272V322M928.5 269V321M929.5 268V324M930.5 273V323M931.5 264V322M932.5 263V316M933.5 268V319M934.5 264V313M935.5 266V320M936.5 262V320M937.5 271V324M938.5 269V323M939.5 272V323M940.5 265V323M941.5 273V323M942.5 266V317M943.5 266V318M944.5 274V317M945.5 266V279M946.5 266V317M947.5 267V315M948.5 273V315M949.5 266V316M950.5 267V315M951.5 275V315M952.5 271V319M953.5 277V321M954.5 271V315M955.5 270V321M956.5 267V321M957.5 272V321M958.5 266V317M959.5 265V316M960.5 266V316M961.5 265V317M962.5 275V281M963.5 265V318M964.5 273V321M965.5 265V321M966.5 265V322M967.5 265V320M968.5 264V317M969.5 267V282M970.5 268V318M971.5 268V321M972.5 267V316M973.5 266V318M974.5 266V309M975.5 267V318M976.5 273V319M977.5 273V320M978.5 272V319M979.5 273V309M980.5 273V319M981.5 277V319M982.5 268V319M983.5 268V309M984.5 267V292M985.5 265V283M986.5 265V320M987.5 265V322M988.5 265V324M989.5 274V324M990.5 279V292M991.5 270V323M992.5 270V324M993.5 273V321M994.5 263V320M995.5 274V313M996.5 270V313M997.5 269V318M998.5 270V318M999.5 262V324M1000.5 261V324M1001.5 273V315M1002.5 262V324M1003.5 274V324M1004.5 276V311M1005.5 266V323M1006.5 266V323M1007.5 266V323M1008.5 266V323M1009.5 272V323M1010.5 268V324M1011.5 264V324M1012.5 271V323M1013.5 305V319M1014.5 267V319M1015.5 267V318M1016.5 267V319M1017.5 271V319M1018.5 263V320M1019.5 263V296M1020.5 262V327M1021.5 263V322M1022.5 269V286M1023.5 270V316M1024.5 304V316M1025.5 270V315M1026.5 266V316M1027.5 271V328M1028.5 267V323M1029.5 267V323M1030.5 269V323M1031.5 269V279M1032.5 269V322M1033.5 270V294M1034.5 268V313M1035.5 272V313M1036.5 272V313M1037.5 272V313M1038.5 269V311M1039.5 269V322M1040.5 270V309M1041.5 270V312M1042.5 271V319M1043.5 270V318M1044.5 271V310M1045.5 276V316M1046.5 272V312M1047.5 274V312M1048.5 280V309M1049.5 274V316M1050.5 275V311M1051.5 273V311M1052.5 273V304M1053.5 273V302M1054.5 273V309M1055.5 274V311M1056.5 275V312M1057.5 275V311M1058.5 275V312M1059.5 280V310M1060.5 276V307M1061.5 276V309M1062.5 275V309M1063.5 278V310M1064.5 274V306M1065.5 276V307M1066.5 274V307M1067.5 277V307M1068.5 276V306M1069.5 276V303M1070.5 278V309M1071.5 276V309M1072.5 276V309M1073.5 280V310M1074.5 277V303M1075.5 277V304M1076.5 277V304M1077.5 276V304M1078.5 276V307M1079.5 277V307M1080.5 277V307M1081.5 297V307M1082.5 278V307M1083.5 278V305M1084.5 280V302M1085.5 292V305M1086.5 278V305M1087.5 275V305M1088.5 280V304M1089.5 275V300M1090.5 278V306M1091.5 279V306M1092.5 279V300M1093.5 279V302M1094.5 278V306M1095.5 278V306M1096.5 278V308M1097.5 278V306M1098.5 278V306M1099.5 280V306M1100.5 278V306M1101.5 278V306M1102.5 293V306M1103.5 275V301M1104.5 291V306M1105.5 276V306M1106.5 276V307M1107.5 276V308M1108.5 299V307M1109.5 296V300M1110.5 282V300M1111.5 277V306M1112.5 275V306M1113.5 276V284M1114.5 282V308M1115.5 277V308M1116.5 277V305M1117.5 278V305M1118.5 278V307M1119.5 280V307M1120.5 281V307M1121.5 278V307M1122.5 278V307M1123.5 278V306M1124.5 278V306M1125.5 277V307M1126.5 281V301M1127.5 280V287M1128.5 280V306M1129.5 282V302M1130.5 278V308M1131.5 278V308" stroke="#7e2f8e" stroke-opacity="0.76" stroke-width="1" fill="none"/><path d="M457.5 284V301M458.5 285V295M459.5 286V303M460.5 288V301M461.5 284V299M462.5 279V301M463.5 279V306M464.5 281V305M465.5 278V304M466.5 285V296M467.5 285V296M468.5 278V302M469.5 284V300M470.5 286V301M473.5 279V297M474.5 287V307M475.5 283V300M476.5 285V304M477.5 287V306M478.5 282V299M479.5 287V303M480.5 285V303M481.5 280V303M483.5 283V302M484.5 279V302M485.5 286V304M486.5 282V297M487.5 278V299M491.5 283V305M492.5 286V302M494.5 284V297M496.5 286V301M497.5 284V304M499.5 286V299M500.5 279V298M501.5 283V304M502.5 275V297M504.5 272V302M505.5 277V307M506.5 265V311M509.5 262V311M510.5 274V315M513.5 281V306M514.5 274V316M515.5 258V321M516.5 259V307M518.5 260V333M519.5 259V308M520.5 272V330M521.5 274V310M523.5 249V308M524.5 270V325M525.5 255V328M526.5 237V312M527.5 255V323M529.5 265V329M531.5 262V318M532.5 244V344M534.5 254V332M535.5 275V350M536.5 267V315M537.5 264V337M538.5 246V324M539.5 247V307M540.5 243V318M542.5 265V320M544.5 268V342M545.5 235V321M546.5 240V323M547.5 265V313M548.5 256V312M549.5 248V340M551.5 257V321M553.5 258V335M554.5 237V319M555.5 237V319M556.5 241V332M558.5 265V329M559.5 239V320M560.5 236V314M561.5 269V324M564.5 240V312M566.5 240V339M567.5 248V344M568.5 267V349M569.5 267V351M570.5 247V347M571.5 262V317M572.5 270V326M573.5 250V331M574.5 246V312M575.5 241V339M577.5 263V337M578.5 241V336M579.5 237V334M581.5 250V315M583.5 270V333M584.5 263V313M587.5 267V330M588.5 271V307M590.5 255V319M591.5 258V341M592.5 257V332M593.5 251V328M594.5 260V332M595.5 251V331M597.5 241V352M598.5 268V329M599.5 253V323M600.5 254V348M603.5 249V340M604.5 257V328M605.5 270V344M606.5 263V324M607.5 268V317M609.5 272V344M610.5 265V334M611.5 255V347M612.5 236V327M614.5 244V317M616.5 242V314M617.5 248V353M619.5 238V314M623.5 261V340M625.5 246V328M626.5 238V332M627.5 266V328M628.5 229V331M629.5 240V324M630.5 244V321M632.5 269V313M633.5 260V330M635.5 270V342M636.5 264V326M637.5 248V312M638.5 257V331M639.5 247V317M641.5 250V318M643.5 259V317M644.5 267V315M645.5 237V325M646.5 239V308M647.5 247V347M652.5 267V337M653.5 242V346M655.5 246V315M656.5 261V324M657.5 263V315M658.5 241V346M659.5 256V341M660.5 254V313M662.5 261V335M664.5 261V326M667.5 258V340M668.5 246V346M669.5 258V316M670.5 267V321M671.5 257V323M672.5 242V344M673.5 263V335M674.5 250V314M675.5 249V343M677.5 247V323M679.5 243V324M680.5 258V315M681.5 260V330M682.5 269V324M683.5 271V329M684.5 255V318M685.5 248V329M686.5 252V322M687.5 267V316M688.5 235V338M689.5 234V327M690.5 239V313M692.5 252V317M694.5 237V321M695.5 243V332M696.5 268V323M701.5 266V322M703.5 247V334M705.5 274V313M706.5 261V341M707.5 266V343M708.5 264V306M709.5 253V336M710.5 235V320M711.5 258V329M712.5 233V347M715.5 262V311M716.5 268V323M717.5 247V329M718.5 259V314M720.5 260V332M723.5 265V319M724.5 256V309M725.5 255V314M726.5 267V330M727.5 274V318M728.5 269V312M729.5 249V323M730.5 265V320M731.5 274V322M733.5 259V309M734.5 269V323M735.5 270V318M736.5 258V322M737.5 264V317M738.5 252V315M740.5 266V338M742.5 250V315M743.5 259V319M744.5 260V309M747.5 265V310M750.5 246V312M752.5 246V313M753.5 244V311M755.5 269V307M756.5 251V314M757.5 247V307M758.5 257V317M759.5 257V319M761.5 257V327M762.5 264V311M764.5 265V330M765.5 276V322M766.5 274V308M768.5 267V309M769.5 274V324M771.5 281V308M772.5 265V322M774.5 263V326M775.5 279V321M776.5 276V321M778.5 267V311M779.5 264V317M780.5 272V310M781.5 258V311M784.5 271V315M785.5 252V308M786.5 275V314M787.5 262V305M788.5 279V305M789.5 267V320M790.5 274V312M791.5 280V319M792.5 278V325M793.5 280V306M794.5 279V304M795.5 273V317M797.5 279V305M798.5 270V313M799.5 283V306M800.5 259V310M801.5 276V307M802.5 269V318M804.5 263V319M805.5 266V307M806.5 277V302M807.5 261V305M808.5 277V323M809.5 262V308M810.5 269V317M811.5 261V308M812.5 279V310M814.5 275V311M817.5 262V306M818.5 272V302M819.5 279V305M820.5 260V314M821.5 278V307M822.5 281V305M823.5 269V310M824.5 263V314M826.5 262V314M827.5 267V308M828.5 269V309M829.5 278V310M830.5 279V310M831.5 282V313M832.5 266V303M833.5 280V301M834.5 274V307M835.5 278V304M836.5 280V304M838.5 278V311M839.5 279V308M841.5 272V302M844.5 277V314M845.5 275V305M847.5 268V312M848.5 277V305M849.5 273V305M850.5 272V301M851.5 279V303M852.5 277V300M853.5 282V306M854.5 280V305M856.5 275V301M857.5 275V301M858.5 275V299M859.5 282V307M860.5 280V301M861.5 277V302M862.5 274V302M864.5 279V302M866.5 277V301M867.5 269V309M869.5 282V304M870.5 282V300M872.5 282V303M876.5 279V311M879.5 275V309M880.5 282V302M881.5 274V303M882.5 281V305M883.5 283V313M884.5 275V304M885.5 274V311M886.5 281V312M887.5 274V303M888.5 269V299M889.5 275V309M890.5 271V309M891.5 283V308M892.5 271V303M893.5 277V307M894.5 273V311M895.5 281V301M896.5 271V305M897.5 268V310M898.5 278V302M899.5 276V306M902.5 279V313M903.5 282V314M904.5 275V304M905.5 274V310M906.5 279V302M907.5 277V303M908.5 271V301M910.5 278V302M911.5 275V309M912.5 280V305M913.5 282V305M919.5 273V301M920.5 279V304M922.5 272V305M923.5 277V303M924.5 279V307M925.5 282V306M926.5 276V307M929.5 278V311M930.5 282V307M931.5 276V305M932.5 270V301M933.5 280V308M934.5 277V308M935.5 277V306M937.5 275V317M938.5 282V309M941.5 280V304M942.5 277V309M943.5 272V303M944.5 283V303M946.5 280V307M947.5 283V299M948.5 282V300M950.5 280V307M951.5 286V299M952.5 278V305M953.5 281V303M955.5 285V308M957.5 285V309M958.5 275V300M959.5 275V306M960.5 279V304M963.5 283V303M964.5 282V310M965.5 272V313M966.5 270V305M967.5 278V309M970.5 279V311M971.5 276V310M972.5 277V301M973.5 278V307M975.5 279V300M976.5 279V310M977.5 279V307M978.5 284V302M979.5 280V302M980.5 277V309M981.5 280V301M983.5 282V299M986.5 272V313M987.5 278V304M988.5 283V302M989.5 280V312M991.5 277V309M992.5 281V306M993.5 285V305M994.5 278V300M995.5 286V308M996.5 276V304M997.5 278V311M1000.5 268V316M1002.5 272V306M1003.5 283V309M1004.5 283V301M1005.5 281V305M1006.5 275V304M1007.5 274V311M1008.5 279V311M1009.5 285V314M1010.5 275V308M1012.5 280V304M1014.5 284V300M1015.5 273V301M1016.5 279V302M1018.5 270V309M1021.5 270V315M1023.5 283V305M1025.5 279V305M1026.5 283V302M1027.5 283V306M1028.5 282V311M1029.5 281V310M1032.5 284V303M1034.5 277V298M1035.5 285V301M1036.5 277V306M1037.5 276V301M1038.5 275V300M1041.5 283V305M1042.5 277V306M1043.5 280V312M1044.5 282V297M1045.5 279V309M1046.5 278V300M1047.5 284V302M1048.5 286V298M1049.5 279V300M1052.5 286V302M1053.5 278V300M1054.5 282V297M1057.5 284V301M1058.5 281V298M1059.5 286V298M1060.5 286V297M1063.5 282V305M1064.5 283V302M1065.5 286V304M1067.5 285V299M1068.5 283V300M1069.5 283V299M1070.5 286V301M1071.5 281V300M1072.5 282V304M1073.5 283V300M1075.5 287V300M1076.5 286V301M1077.5 280V300M1078.5 279V300M1079.5 285V304M1080.5 282V297M1082.5 283V304M1083.5 283V296M1084.5 287V296M1087.5 281V298M1088.5 285V301M1089.5 279V298M1092.5 286V295M1093.5 286V296M1094.5 283V300M1095.5 284V299M1096.5 284V301M1097.5 285V299M1098.5 284V298M1099.5 284V302M1100.5 286V302M1101.5 281V299M1103.5 282V298M1105.5 279V301M1110.5 285V298M1111.5 282V296M1112.5 282V298M1114.5 286V301M1115.5 284V303M1116.5 283V296M1117.5 284V297M1118.5 284V300M1119.5 283V303M1120.5 287V296M1122.5 285V303M1123.5 282V297M1124.5 282V302M1125.5 280V299M1126.5 288V297M1128.5 286V300M1129.5 286V299M1131.5 285V303" stroke="#7e2f8e" stroke-opacity="0.8" stroke-width="1" fill="none"/></g><defs><clipPath id="c1"><rect x="456" y="163" width="722" height="258"/></clipPath><clipPath id="c2"><rect x="457" y="469" width="720" height="282"/></clipPath></defs><rect x="455.5" y="162.5" width="723" height="259" fill="none" stroke="#262626" stroke-width="1.2"/><path d="M455.5 424v-5" stroke="#262626"/><path d="M526.7 424v-5" stroke="#262626"/><path d="M597.9 424v-5" stroke="#262626"/><path d="M669.1 424v-5" stroke="#262626"/><path d="M740.3 424v-5" stroke="#262626"/><path d="M811.5 424v-5" stroke="#262626"/><path d="M882.7 424v-5" stroke="#262626"/><path d="M953.9 424v-5" stroke="#262626"/><path d="M1025.1 424v-5" stroke="#262626"/><path d="M1096.3 424v-5" stroke="#262626"/><path d="M1167.5 424v-5" stroke="#262626"/><path d="M453 415.0h5" stroke="#262626"/><path d="M453 373.7h5" stroke="#262626"/><path d="M453 332.4h5" stroke="#262626"/><path d="M453 291.1h5" stroke="#262626"/><path d="M453 249.8h5" stroke="#262626"/><path d="M453 208.5h5" stroke="#262626"/><path d="M453 167.2h5" stroke="#262626"/><text x="455.5" y="436" font-family="Liberation Sans" font-size="9.6" fill="#262626" text-anchor="middle">0</text><text x="526.7" y="436" font-family="Liberation Sans" font-size="9.6" fill="#262626" text-anchor="middle">0.2</text><text x="597.9" y="436" font-family="Liberation Sans" font-size="9.6" fill="#262626" text-anchor="middle">0.4</text><text x="669.1" y="436" font-family="Liberation Sans" font-size="9.6" fill="#262626" text-anchor="middle">0.6</text><text x="740.3" y="436" font-family="Liberation Sans" font-size="9.6" fill="#262626" text-anchor="middle">0.8</text><text x="811.5" y="436" font-family="Liberation Sans" font-size="9.6" fill="#262626" text-anchor="middle">1.0</text><text x="882.7" y="436" font-family="Liberation Sans" font-size="9.6" fill="#262626" text-anchor="middle">1.2</text><text x="953.9" y="436" font-family="Liberation Sans" font-size="9.6" fill="#262626" text-anchor="middle">1.4</text><text x="1025.1" y="436" font-family="Liberation Sans" font-size="9.6" fill="#262626" text-anchor="middle">1.6</text><text x="1096.3" y="436" font-family="Liberation Sans" font-size="9.6" fill="#262626" text-anchor="middle">1.8</text><text x="1167.5" y="436" font-family="Liberation Sans" font-size="9.6" fill="#262626" text-anchor="middle">2.0</text><text x="448" y="419.0" font-family="Liberation Sans" font-size="9.6" fill="#262626" text-anchor="end">-0.3</text><text x="448" y="377.7" font-family="Liberation Sans" font-size="9.6" fill="#262626" text-anchor="end">-0.2</text><text x="448" y="336.4" font-family="Liberation Sans" font-size="9.6" fill="#262626" text-anchor="end">-0.1</text><text x="448" y="295.1" font-family="Liberation Sans" font-size="9.6" fill="#262626" text-anchor="end">0</text><text x="448" y="253.8" font-family="Liberation Sans" font-size="9.6" fill="#262626" text-anchor="end">0.1</text><text x="448" y="212.5" font-family="Liberation Sans" font-size="9.6" fill="#262626" text-anchor="end">0.2</text><text x="448" y="171.2" font-family="Liberation Sans" font-size="9.6" fill="#262626" text-anchor="end">0.3</text><text x="812" y="457" font-family="Liberation Sans" fill="#262626" font-size="10" text-anchor="middle">Time (s)</text><rect x="457" y="146" width="8" height="8" fill="#d95319"/><text x="469" y="154" font-family="Liberation Sans" font-size="12" fill="#333">whale_w_ROI</text><rect x="554" y="146" width="8" height="8" fill="#edb120"/><text x="566" y="154" font-family="Liberation Sans" font-size="12" fill="#333">whale_w_ROI_1</text><rect x="663" y="146" width="8" height="8" fill="#7e2f8e"/><text x="676" y="154" font-family="Liberation Sans" font-size="12" fill="#333">whale_w_ROI_2</text><rect x="456" y="468" width="722" height="284" fill="#fff"/><path d="M455.5 469V751" stroke="#d9d9d9"/><path d="M527.8 469V751" stroke="#d9d9d9"/><path d="M600.0 469V751" stroke="#d9d9d9"/><path d="M672.2 469V751" stroke="#d9d9d9"/><path d="M744.5 469V751" stroke="#d9d9d9"/><path d="M816.8 469V751" stroke="#d9d9d9"/><path d="M889.0 469V751" stroke="#d9d9d9"/><path d="M961.2 469V751" stroke="#d9d9d9"/><path d="M1033.5 469V751" stroke="#d9d9d9"/><path d="M1105.8 469V751" stroke="#d9d9d9"/><path d="M1178.0 469V751" stroke="#d9d9d9"/><path d="M457 490.2H1177" stroke="#d9d9d9"/><path d="M457 535.1H1177" stroke="#d9d9d9"/><path d="M457 579.9H1177" stroke="#d9d9d9"/><path d="M457 624.8H1177" stroke="#d9d9d9"/><path d="M457 669.6H1177" stroke="#d9d9d9"/><path d="M457 714.5H1177" stroke="#d9d9d9"/><g clip-path="url(#c2)"><polyline points="455.5,715.6 456.5,708.7 457.5,701.6 458.5,696.3 459.5,680.4 460.5,665.9 461.5,644.0 462.5,635.6 463.5,649.2 464.5,673.0 465.5,683.3 466.5,677.5 467.5,676.0 468.5,676.9 469.5,675.9 470.5,681.7 471.5,679.2 472.5,666.2 473.5,665.4 474.5,669.1 475.5,662.7 476.5,656.5 477.5,647.3 478.5,646.6 479.5,660.0 480.5,677.5 481.5,693.7 482.5,710.1 483.5,720.2 484.5,712.6 485.5,696.9 486.5,683.2 487.5,675.7 488.5,671.5 489.5,671.5 490.5,675.6 491.5,675.6 492.5,672.6 493.5,668.2 494.5,671.8 495.5,679.5 496.5,681.4 497.5,689.7 498.5,686.7 499.5,686.2 500.5,684.5 501.5,682.5 502.5,669.2 503.5,672.4 504.5,671.0 505.5,681.2 506.5,689.5 507.5,697.6 508.5,690.3 509.5,685.3 510.5,673.3 511.5,666.5 512.5,649.7 513.5,623.6 514.5,587.9 515.5,550.7 516.5,519.4 517.5,528.2 518.5,551.2 519.5,582.4 520.5,605.0 521.5,624.1 522.5,638.9 523.5,640.6 524.5,641.9 525.5,639.0 526.5,642.3 527.5,633.3 528.6,630.6 529.6,623.0 530.6,623.1 531.6,626.9 532.6,624.0 533.6,609.6 534.6,602.4 535.6,593.0 536.6,597.9 537.6,601.8 538.6,599.0 539.6,604.5 540.6,617.8 541.6,630.9 542.6,635.4 543.6,635.0 544.6,637.5 545.6,637.8 546.6,639.4 547.6,642.7 548.6,651.2 549.6,655.5 550.6,653.9 551.6,661.2 552.6,665.7 553.6,664.6 554.6,653.8 555.6,654.8 556.6,663.9 557.6,666.4 558.6,662.2 559.6,644.8 560.6,622.9 561.6,610.5 562.6,605.9 563.6,608.3 564.6,609.4 565.6,616.9 566.6,621.9 567.6,620.9 568.6,625.2 569.6,626.6 570.6,622.0 571.6,611.1 572.6,593.9 573.6,586.5 574.6,574.1 575.6,557.4 576.6,545.9 577.6,542.2 578.6,542.5 579.6,551.7 580.6,564.4 581.6,575.9 582.6,585.5 583.6,591.5 584.6,598.9 585.6,604.7 586.6,616.4 587.6,625.5 588.6,629.9 589.6,631.3 590.6,626.1 591.6,627.3 592.6,626.1 593.6,626.1 594.6,629.8 595.6,626.3 596.6,625.1 597.6,631.6 598.6,640.0 599.6,645.2 600.6,645.9 601.6,639.0 602.6,635.4 603.6,634.4 604.6,629.0 605.6,635.3 606.6,627.1 607.6,624.7 608.6,634.3 609.6,634.8 610.6,635.3 611.6,623.0 612.6,631.3 613.6,637.0 614.6,638.6 615.6,635.8 616.6,632.1 617.6,628.1 618.6,629.8 619.6,632.1 620.6,631.4 621.6,629.4 622.6,629.6 623.6,625.9 624.6,617.6 625.6,608.8 626.6,596.8 627.6,586.3 628.6,575.9 629.6,569.5 630.6,557.3 631.6,554.3 632.6,552.8 633.6,561.5 634.6,567.6 635.6,549.5 636.6,524.2 637.6,496.3 638.6,488.9 639.6,486.2 640.6,499.7 641.6,525.7 642.6,537.1 643.6,542.4 644.6,551.9 645.6,562.7 646.6,570.1 647.6,575.3 648.6,573.4 649.6,578.6 650.6,585.5 651.6,594.2 652.6,602.9 653.6,608.3 654.6,610.2 655.6,602.6 656.6,602.1 657.6,600.9 658.6,607.9 659.6,612.5 660.6,619.9 661.6,625.5 662.6,626.3 663.6,625.4 664.6,623.8 665.6,627.7 666.6,632.7 667.6,632.9 668.6,631.4 669.6,630.3 670.6,630.9 671.6,628.5 672.7,624.9 673.7,625.7 674.7,627.2 675.7,627.4 676.7,631.3 677.7,632.7 678.7,635.7 679.7,638.1 680.7,637.0 681.7,636.4 682.7,633.4 683.7,625.3 684.7,613.1 685.7,613.8 686.7,610.2 687.7,611.4 688.7,613.0 689.7,617.6 690.7,618.4 691.7,613.7 692.7,608.1 693.7,594.3 694.7,576.9 695.7,560.9 696.7,546.9 697.7,535.0 698.7,529.6 699.7,525.9 700.7,525.8 701.7,533.1 702.7,536.8 703.7,544.1 704.7,551.5 705.7,562.2 706.7,573.4 707.7,590.9 708.7,604.6 709.7,618.6 710.7,622.1 711.7,623.7 712.7,627.3 713.7,632.4 714.7,632.5 715.7,631.5 716.7,614.1 717.7,626.2 718.7,634.6 719.7,639.5 720.7,638.7 721.7,630.3 722.7,634.6 723.7,632.1 724.7,636.1 725.7,632.8 726.7,636.2 727.7,637.8 728.7,638.5 729.7,637.4 730.7,636.1 731.7,637.1 732.7,643.4 733.7,649.6 734.7,646.3 735.7,641.3 736.7,643.1 737.7,645.2 738.7,641.2 739.7,640.5 740.7,636.6 741.7,643.8 742.7,642.0 743.7,638.5 744.7,634.7 745.7,635.1 746.7,642.7 747.7,639.4 748.7,634.5 749.7,631.7 750.7,628.9 751.7,622.0 752.7,621.0 753.7,618.2 754.7,613.1 755.7,608.9 756.7,601.6 757.7,590.3 758.7,580.9 759.7,569.0 760.7,562.7 761.7,562.0 762.7,562.6 763.7,566.7 764.7,571.6 765.7,584.0 766.7,592.5 767.7,597.2 768.7,609.5 769.7,620.4 770.7,628.8 771.7,635.9 772.7,641.2 773.7,646.7 774.7,645.3 775.7,641.7 776.7,629.2 777.7,622.6 778.7,623.3 779.7,623.8 780.7,617.0 781.7,621.2 782.7,639.3 783.7,643.3 784.7,636.9 785.7,637.6 786.7,628.0 787.7,634.8 788.7,631.4 789.7,638.9 790.7,637.9 791.7,636.2 792.7,643.3 793.7,644.5 794.7,646.5 795.7,635.8 796.7,621.3 797.7,621.4 798.7,636.1 799.7,648.2 800.7,651.1 801.7,650.3 802.7,645.6 803.7,648.1 804.7,642.1 805.7,634.5 806.7,619.8 807.7,615.5 808.7,610.0 809.7,606.6 810.7,618.4 811.7,635.8 812.7,640.7 813.7,635.8 814.7,633.8 815.7,626.5 816.8,618.7 817.8,608.9 818.8,601.0 819.8,594.9 820.8,596.6 821.8,598.6 822.8,599.5 823.8,593.9 824.8,593.0 825.8,600.0 826.8,607.4 827.8,609.2 828.8,612.9 829.8,617.8 830.8,626.0 831.8,634.4 832.8,631.6 833.8,626.9 834.8,633.3 835.8,640.5 836.8,648.5 837.8,651.1 838.8,648.8 839.8,647.6 840.8,640.4 841.8,647.0 842.8,636.4 843.8,631.9 844.8,645.1 845.8,648.8 846.8,651.4 847.8,651.4 848.8,655.7 849.8,661.4 850.8,658.9 851.8,650.9 852.8,647.4 853.8,640.9 854.8,642.6 855.8,647.6 856.8,639.1 857.8,636.6 858.8,628.5 859.8,641.7 860.8,649.2 861.8,643.6 862.8,636.4 863.8,628.7 864.8,627.2 865.8,625.8 866.8,616.5 867.8,609.9 868.8,614.2 869.8,619.2 870.8,625.1 871.8,635.6 872.8,635.9 873.8,632.4 874.8,631.8 875.8,637.9 876.8,640.0 877.8,639.4 878.8,637.8 879.8,636.1 880.8,631.5 881.8,630.9 882.8,623.3 883.8,613.0 884.8,606.9 885.8,603.0 886.8,607.3 887.8,616.8 888.8,625.9 889.8,637.7 890.8,638.9 891.8,647.8 892.8,650.7 893.8,648.9 894.8,638.7 895.8,626.4 896.8,631.9 897.8,638.4 898.8,647.6 899.8,637.6 900.8,644.0 901.8,646.6 902.8,652.2 903.8,648.2 904.8,639.3 905.8,633.7 906.8,642.4 907.8,637.9 908.8,646.8 909.8,641.8 910.8,635.9 911.8,642.8 912.8,645.0 913.8,653.1 914.8,655.7 915.8,656.3 916.8,656.2 917.8,654.6 918.8,653.8 919.8,655.0 920.8,652.4 921.8,646.4 922.8,654.2 923.8,660.6 924.8,660.1 925.8,649.4 926.8,642.7 927.8,645.0 928.8,644.2 929.8,651.2 930.8,652.8 931.8,651.8 932.8,648.5 933.8,643.2 934.8,648.4 935.8,650.6 936.8,647.1 937.8,645.8 938.8,647.3 939.8,642.1 940.8,634.8 941.8,624.9 942.8,619.9 943.8,617.8 944.8,619.9 945.8,621.4 946.8,625.3 947.8,626.7 948.8,630.4 949.8,637.1 950.8,636.7 951.8,641.3 952.8,640.6 953.8,646.4 954.8,649.7 955.8,648.8 956.8,631.0 957.8,637.8 958.8,647.6 959.8,660.1 960.8,663.9 961.9,660.2 962.9,653.3 963.9,657.7 964.9,657.9 965.9,659.0 966.9,655.5 967.9,651.9 968.9,639.8 969.9,634.1 970.9,652.2 971.9,659.0 972.9,657.3 973.9,653.2 974.9,656.1 975.9,658.7 976.9,645.0 977.9,646.1 978.9,650.3 979.9,655.7 980.9,656.1 981.9,646.7 982.9,638.9 983.9,636.5 984.9,628.0 985.9,648.3 986.9,656.2 987.9,656.3 988.9,644.5 989.9,636.8 990.9,634.6 991.9,641.1 992.9,648.5 993.9,658.6 994.9,659.2 995.9,657.8 996.9,656.6 997.9,656.4 998.9,659.3 999.9,656.9 1000.9,654.5 1001.9,646.2 1002.9,645.4 1003.9,641.9 1004.9,646.9 1005.9,655.1 1006.9,656.0 1007.9,647.4 1008.9,634.6 1009.9,645.0 1010.9,658.1 1011.9,657.2 1012.9,650.3 1013.9,640.3 1014.9,651.5 1015.9,660.4 1016.9,663.1 1017.9,659.4 1018.9,653.6 1019.9,639.4 1020.9,638.3 1021.9,638.9 1022.9,649.9 1023.9,656.6 1024.9,664.0 1025.9,662.3 1026.9,656.8 1027.9,638.7 1028.9,637.4 1029.9,655.7 1030.9,662.4 1031.9,666.0 1032.9,660.8 1033.9,653.9 1034.9,641.5 1035.9,640.1 1036.9,631.3 1037.9,633.0 1038.9,648.3 1039.9,650.7 1040.9,652.7 1041.9,654.8 1042.9,655.8 1043.9,654.2 1044.9,650.7 1045.9,647.6 1046.9,647.4 1047.9,658.7 1048.9,658.9 1049.9,662.7 1050.9,659.3 1051.9,659.3 1052.9,663.1 1053.9,665.8 1054.9,664.9 1055.9,648.6 1056.9,640.4 1057.9,644.9 1058.9,660.3 1059.9,662.2 1060.9,651.2 1061.9,638.6 1062.9,640.3 1063.9,654.5 1064.9,657.3 1065.9,654.9 1066.9,656.8 1067.9,655.1 1068.9,653.4 1069.9,656.9 1070.9,656.7 1071.9,659.2 1072.9,653.5 1073.9,654.2 1074.9,652.3 1075.9,657.3 1076.9,656.6 1077.9,653.4 1078.9,657.6 1079.9,658.6 1080.9,659.5 1081.9,657.5 1082.9,640.4 1083.9,636.8 1084.9,647.3 1085.9,654.4 1086.9,655.3 1087.9,652.8 1088.9,652.4 1089.9,644.6 1090.9,641.8 1091.9,642.2 1092.9,645.7 1093.9,647.7 1094.9,655.3 1095.9,655.0 1096.9,654.6 1097.9,658.2 1098.9,658.7 1099.9,664.8 1100.9,659.4 1101.9,653.3 1102.9,654.6 1103.9,657.0 1104.9,664.1 1106.0,664.0 1107.0,657.9 1108.0,656.5 1109.0,654.4 1110.0,656.9 1111.0,661.2 1112.0,660.8 1113.0,660.0 1114.0,654.0 1115.0,652.4 1116.0,653.4 1117.0,658.7 1118.0,657.3 1119.0,645.0 1120.0,623.9 1121.0,623.2 1122.0,640.6 1123.0,656.0 1124.0,661.4 1125.0,659.3 1126.0,655.0 1127.0,640.9 1128.0,641.5 1129.0,641.5 1130.0,644.3 1131.0,639.2 1132.0,637.2 1133.0,649.6 1134.0,657.5 1135.0,663.1 1136.0,661.3 1137.0,661.2 1138.0,659.5 1139.0,655.0 1140.0,641.2 1141.0,635.1 1142.0,627.2 1143.0,629.4 1144.0,636.4 1145.0,642.2 1146.0,652.0 1147.0,644.5 1148.0,650.6 1149.0,649.6 1150.0,651.2 1151.0,646.8 1152.0,639.5 1153.0,649.6 1154.0,648.3 1155.0,636.2 1156.0,630.6 1157.0,640.2 1158.0,647.5 1159.0,648.6 1160.0,641.3 1161.0,643.8 1162.0,645.0 1163.0,643.1 1164.0,635.2 1165.0,623.8 1166.0,640.0 1167.0,645.1 1168.0,650.4 1169.0,644.5 1170.0,638.3 1171.0,631.3 1172.0,619.4 1173.0,626.0 1174.0,635.2 1175.0,649.4 1176.0,647.5 1177.0,640.5 1178.0,629.1" fill="none" stroke="#d95319" stroke-opacity="0.85" stroke-width="2.2" stroke-linejoin="round"/><polyline points="455.5,726.0 456.5,709.6 457.5,693.9 458.5,675.3 459.5,668.9 460.5,661.9 461.5,655.1 462.5,635.5 463.5,629.6 464.5,631.8 465.5,647.1 466.5,672.1 467.5,702.4 468.5,716.5 469.5,715.6 470.5,702.9 471.5,689.5 472.5,684.0 473.5,671.6 474.5,669.7 475.5,665.3 476.5,658.3 477.5,650.9 478.5,651.5 479.5,670.7 480.5,687.1 481.5,696.0 482.5,702.2 483.5,702.7 484.5,698.7 485.5,692.3 486.5,691.9 487.5,681.3 488.5,674.1 489.5,674.2 490.5,674.0 491.5,675.5 492.5,668.8 493.5,672.3 494.5,670.6 495.5,662.6 496.5,648.4 497.5,648.0 498.5,643.7 499.5,646.6 500.5,650.6 501.5,658.8 502.5,668.3 503.5,669.2 504.5,672.6 505.5,683.3 506.5,691.0 507.5,694.4 508.5,689.7 509.5,689.4 510.5,680.3 511.5,669.6 512.5,662.3 513.5,645.8 514.5,616.8 515.5,582.5 516.5,542.7 517.5,563.3 518.5,586.4 519.5,609.3 520.5,623.6 521.5,622.3 522.5,618.8 523.5,621.4 524.5,616.6 525.5,624.7 526.5,628.6 527.5,634.0 528.6,636.0 529.6,635.0 530.6,631.5 531.6,620.3 532.6,611.1 533.6,616.6 534.6,621.7 535.6,617.7 536.6,621.3 537.6,620.6 538.6,625.9 539.6,628.0 540.6,623.7 541.6,619.3 542.6,620.7 543.6,616.9 544.6,621.7 545.6,630.1 546.6,629.1 547.6,637.1 548.6,645.4 549.6,643.4 550.6,644.6 551.6,657.8 552.6,660.4 553.6,659.5 554.6,652.5 555.6,649.5 556.6,643.8 557.6,639.6 558.6,633.4 559.6,626.6 560.6,623.8 561.6,617.8 562.6,599.1 563.6,594.3 564.6,599.2 565.6,618.8 566.6,627.5 567.6,631.7 568.6,639.3 569.6,641.3 570.6,629.9 571.6,620.2 572.6,604.6 573.6,586.9 574.6,567.7 575.6,556.7 576.6,550.3 577.6,554.0 578.6,555.6 579.6,566.8 580.6,578.8 581.6,593.5 582.6,604.3 583.6,612.6 584.6,621.0 585.6,624.3 586.6,628.9 587.6,628.8 588.6,627.4 589.6,623.1 590.6,622.5 591.6,621.7 592.6,624.0 593.6,621.3 594.6,612.9 595.6,623.7 596.6,627.0 597.6,634.3 598.6,627.9 599.6,624.3 600.6,620.1 601.6,621.3 602.6,617.3 603.6,626.4 604.6,631.4 605.6,638.4 606.6,636.0 607.6,636.9 608.6,628.8 609.6,622.7 610.6,626.1 611.6,634.5 612.6,639.8 613.6,641.4 614.6,643.6 615.6,640.8 616.6,639.4 617.6,636.8 618.6,633.4 619.6,619.6 620.6,611.4 621.6,607.3 622.6,612.4 623.6,618.4 624.6,621.7 625.6,619.2 626.6,605.3 627.6,583.3 628.6,565.9 629.6,555.1 630.6,556.8 631.6,572.2 632.6,589.2 633.6,602.9 634.6,597.8 635.6,575.9 636.6,540.2 637.6,499.0 638.6,482.6 639.6,479.9 640.6,496.7 641.6,540.7 642.6,579.6 643.6,600.8 644.6,619.1 645.6,631.8 646.6,630.5 647.6,630.3 648.6,626.1 649.6,623.0 650.6,617.2 651.6,623.9 652.6,622.2 653.6,622.8 654.6,627.7 655.6,627.8 656.6,631.2 657.6,630.8 658.6,621.5 659.6,626.4 660.6,615.8 661.6,616.6 662.6,629.8 663.6,629.2 664.6,628.7 665.6,630.0 666.6,632.4 667.6,634.6 668.6,635.6 669.6,632.7 670.6,624.2 671.6,612.8 672.7,617.0 673.7,624.5 674.7,630.1 675.7,629.2 676.7,622.4 677.7,614.8 678.7,607.4 679.7,612.3 680.7,622.8 681.7,632.2 682.7,640.1 683.7,636.2 684.7,633.1 685.7,628.2 686.7,620.9 687.7,627.4 688.7,630.3 689.7,626.2 690.7,618.8 691.7,608.9 692.7,600.1 693.7,590.2 694.7,576.7 695.7,567.9 696.7,554.1 697.7,539.1 698.7,530.4 699.7,531.6 700.7,537.3 701.7,548.7 702.7,565.2 703.7,584.7 704.7,601.7 705.7,613.2 706.7,617.8 707.7,622.2 708.7,625.9 709.7,631.7 710.7,636.0 711.7,637.4 712.7,638.0 713.7,635.8 714.7,636.1 715.7,628.8 716.7,629.9 717.7,632.6 718.7,630.6 719.7,622.2 720.7,626.1 721.7,631.5 722.7,641.4 723.7,644.0 724.7,637.7 725.7,628.3 726.7,618.4 727.7,611.8 728.7,618.8 729.7,636.4 730.7,641.4 731.7,644.4 732.7,643.3 733.7,641.3 734.7,641.5 735.7,645.2 736.7,639.1 737.7,638.4 738.7,638.0 739.7,630.8 740.7,623.6 741.7,627.2 742.7,639.8 743.7,642.5 744.7,642.8 745.7,637.7 746.7,643.7 747.7,642.4 748.7,642.0 749.7,643.3 750.7,647.0 751.7,648.3 752.7,643.9 753.7,641.1 754.7,638.3 755.7,634.6 756.7,621.5 757.7,602.5 758.7,590.8 759.7,580.4 760.7,572.0 761.7,567.9 762.7,575.7 763.7,591.4 764.7,605.7 765.7,610.9 766.7,621.1 767.7,628.3 768.7,631.2 769.7,635.7 770.7,639.2 771.7,634.6 772.7,641.6 773.7,643.5 774.7,642.2 775.7,633.4 776.7,625.1 777.7,625.3 778.7,633.6 779.7,637.6 780.7,629.9 781.7,626.5 782.7,621.6 783.7,623.8 784.7,621.5 785.7,625.6 786.7,635.8 787.7,649.7 788.7,650.4 789.7,649.7 790.7,645.6 791.7,639.0 792.7,635.9 793.7,635.0 794.7,628.4 795.7,631.8 796.7,633.3 797.7,620.3 798.7,614.3 799.7,609.4 800.7,611.7 801.7,625.4 802.7,647.2 803.7,655.3 804.7,652.2 805.7,644.5 806.7,628.7 807.7,625.9 808.7,632.4 809.7,631.0 810.7,634.3 811.7,644.6 812.7,645.5 813.7,644.3 814.7,637.8 815.7,630.5 816.8,631.0 817.8,625.5 818.8,617.4 819.8,608.6 820.8,605.7 821.8,601.3 822.8,597.7 823.8,598.2 824.8,607.3 825.8,620.1 826.8,630.6 827.8,638.2 828.8,646.2 829.8,651.2 830.8,652.6 831.8,649.2 832.8,646.8 833.8,638.0 834.8,633.3 835.8,629.5 836.8,638.1 837.8,644.5 838.8,642.3 839.8,628.5 840.8,621.8 841.8,624.4 842.8,639.0 843.8,637.8 844.8,645.4 845.8,646.7 846.8,647.8 847.8,652.6 848.8,648.7 849.8,637.9 850.8,623.4 851.8,630.8 852.8,645.8 853.8,653.6 854.8,653.4 855.8,652.6 856.8,640.9 857.8,647.8 858.8,647.9 859.8,649.6 860.8,646.7 861.8,648.7 862.8,649.2 863.8,650.9 864.8,648.3 865.8,648.8 866.8,649.3 867.8,646.3 868.8,640.7 869.8,637.4 870.8,635.0 871.8,641.9 872.8,637.5 873.8,640.6 874.8,633.2 875.8,627.9 876.8,630.3 877.8,632.5 878.8,630.3 879.8,627.6 880.8,627.5 881.8,624.5 882.8,619.7 883.8,613.6 884.8,609.7 885.8,614.7 886.8,624.0 887.8,632.9 888.8,631.7 889.8,636.4 890.8,639.4 891.8,648.0 892.8,650.0 893.8,645.7 894.8,631.6 895.8,634.1 896.8,636.4 897.8,650.9 898.8,651.7 899.8,655.9 900.8,656.8 901.8,658.8 902.8,663.3 903.8,664.8 904.8,661.8 905.8,655.5 906.8,654.8 907.8,657.8 908.8,661.0 909.8,661.1 910.8,662.8 911.8,662.8 912.8,658.2 913.8,653.0 914.8,647.1 915.8,648.2 916.8,652.3 917.8,644.1 918.8,639.0 919.8,644.3 920.8,649.9 921.8,649.7 922.8,647.2 923.8,636.8 924.8,634.3 925.8,637.9 926.8,639.1 927.8,643.7 928.8,640.1 929.8,647.2 930.8,648.8 931.8,653.7 932.8,658.0 933.8,653.4 934.8,647.3 935.8,640.4 936.8,642.5 937.8,650.4 938.8,652.4 939.8,647.9 940.8,644.9 941.8,639.5 942.8,636.4 943.8,630.8 944.8,631.7 945.8,633.2 946.8,639.4 947.8,645.4 948.8,651.9 949.8,649.6 950.8,650.9 951.8,652.3 952.8,655.1 953.8,653.6 954.8,652.7 955.8,647.5 956.8,643.5 957.8,638.3 958.8,646.6 959.8,649.2 960.8,654.5 961.9,654.9 962.9,657.1 963.9,656.6 964.9,662.4 965.9,663.7 966.9,655.1 967.9,647.7 968.9,644.3 969.9,656.2 970.9,654.3 971.9,653.6 972.9,644.5 973.9,638.1 974.9,631.3 975.9,639.2 976.9,651.7 977.9,657.0 978.9,657.1 979.9,648.8 980.9,637.5 981.9,634.9 982.9,633.5 983.9,642.7 984.9,645.3 985.9,651.9 986.9,657.9 987.9,662.6 988.9,665.7 989.9,668.6 990.9,664.2 991.9,662.3 992.9,659.0 993.9,661.5 994.9,663.7 995.9,663.8 996.9,662.2 997.9,660.1 998.9,651.0 999.9,642.6 1000.9,641.3 1001.9,644.4 1002.9,644.0 1003.9,658.7 1004.9,663.4 1005.9,660.4 1006.9,661.9 1007.9,661.6 1008.9,659.9 1009.9,661.3 1010.9,664.5 1011.9,658.2 1012.9,649.1 1013.9,639.6 1014.9,633.6 1015.9,636.3 1016.9,639.8 1017.9,648.7 1018.9,647.8 1019.9,641.4 1020.9,634.8 1021.9,628.7 1022.9,634.5 1023.9,639.4 1024.9,644.4 1025.9,656.3 1026.9,661.5 1027.9,661.7 1028.9,657.0 1029.9,663.3 1030.9,658.0 1031.9,653.5 1032.9,650.1 1033.9,650.3 1034.9,659.8 1035.9,664.6 1036.9,662.9 1037.9,662.0 1038.9,658.6 1039.9,655.7 1040.9,660.4 1041.9,663.1 1042.9,664.6 1043.9,665.3 1044.9,661.1 1045.9,658.9 1046.9,661.5 1047.9,663.8 1048.9,668.3 1049.9,664.8 1050.9,664.6 1051.9,666.8 1052.9,663.3 1053.9,656.0 1054.9,649.0 1055.9,650.5 1056.9,652.7 1057.9,657.3 1058.9,653.5 1059.9,659.0 1060.9,649.1 1061.9,651.9 1062.9,655.6 1063.9,653.7 1064.9,647.2 1065.9,654.9 1066.9,657.8 1067.9,663.5 1068.9,663.9 1069.9,660.9 1070.9,649.6 1071.9,645.3 1072.9,656.1 1073.9,655.8 1074.9,658.2 1075.9,657.4 1076.9,662.1 1077.9,661.2 1078.9,650.0 1079.9,646.6 1080.9,658.9 1081.9,662.3 1082.9,659.9 1083.9,651.9 1084.9,640.8 1085.9,643.3 1086.9,653.4 1087.9,654.7 1088.9,653.4 1089.9,654.3 1090.9,656.0 1091.9,652.0 1092.9,650.6 1093.9,657.8 1094.9,666.9 1095.9,667.7 1096.9,661.6 1097.9,658.5 1098.9,654.9 1099.9,658.4 1100.9,655.4 1101.9,643.4 1102.9,643.8 1103.9,650.2 1104.9,647.4 1106.0,647.9 1107.0,646.0 1108.0,649.5 1109.0,655.2 1110.0,665.6 1111.0,669.9 1112.0,666.3 1113.0,663.8 1114.0,659.9 1115.0,654.2 1116.0,644.1 1117.0,636.7 1118.0,636.8 1119.0,646.0 1120.0,646.4 1121.0,644.7 1122.0,640.8 1123.0,645.4 1124.0,659.7 1125.0,664.1 1126.0,661.9 1127.0,655.7 1128.0,647.2 1129.0,632.6 1130.0,634.2 1131.0,643.7 1132.0,644.0 1133.0,640.0 1134.0,644.9 1135.0,643.5 1136.0,635.6 1137.0,621.7 1138.0,617.2 1139.0,638.9 1140.0,659.4 1141.0,661.7 1142.0,660.6 1143.0,653.5 1144.0,647.8 1145.0,645.0 1146.0,642.0 1147.0,654.4 1148.0,657.6 1149.0,659.4 1150.0,660.9 1151.0,658.3 1152.0,655.1 1153.0,641.8 1154.0,646.1 1155.0,649.7 1156.0,653.4 1157.0,654.3 1158.0,653.7 1159.0,652.4 1160.0,648.7 1161.0,651.4 1162.0,652.6 1163.0,651.6 1164.0,644.6 1165.0,637.1 1166.0,634.2 1167.0,641.4 1168.0,643.8 1169.0,647.2 1170.0,651.8 1171.0,650.8 1172.0,649.4 1173.0,648.4 1174.0,649.2 1175.0,651.6 1176.0,651.0 1177.0,650.8 1178.0,654.2" fill="none" stroke="#edb120" stroke-opacity="0.85" stroke-width="2.2" stroke-linejoin="round"/><polyline points="455.5,729.8 456.5,718.4 457.5,700.7 458.5,684.3 459.5,660.3 460.5,646.6 461.5,643.8 462.5,638.6 463.5,652.7 464.5,663.1 465.5,672.1 466.5,691.3 467.5,704.1 468.5,713.8 469.5,703.1 470.5,694.6 471.5,683.3 472.5,679.8 473.5,675.1 474.5,670.9 475.5,670.7 476.5,660.7 477.5,650.3 478.5,653.1 479.5,663.0 480.5,672.8 481.5,682.3 482.5,707.8 483.5,722.4 484.5,708.1 485.5,682.5 486.5,674.2 487.5,668.4 488.5,674.4 489.5,674.2 490.5,678.1 491.5,679.2 492.5,676.8 493.5,676.1 494.5,675.1 495.5,663.4 496.5,663.2 497.5,663.6 498.5,679.1 499.5,683.7 500.5,684.8 501.5,685.8 502.5,688.8 503.5,688.1 504.5,696.7 505.5,699.1 506.5,697.6 507.5,692.9 508.5,684.4 509.5,674.6 510.5,667.8 511.5,664.2 512.5,660.7 513.5,644.2 514.5,611.8 515.5,565.7 516.5,519.8 517.5,527.4 518.5,565.9 519.5,610.5 520.5,636.0 521.5,655.9 522.5,662.6 523.5,656.3 524.5,651.8 525.5,651.6 526.5,652.1 527.5,649.2 528.6,641.6 529.6,636.4 530.6,634.0 531.6,629.2 532.6,625.8 533.6,623.8 534.6,619.8 535.6,615.6 536.6,610.6 537.6,605.3 538.6,605.7 539.6,604.7 540.6,609.7 541.6,620.1 542.6,626.5 543.6,633.6 544.6,640.3 545.6,643.0 546.6,647.7 547.6,651.7 548.6,657.5 549.6,657.6 550.6,661.0 551.6,661.6 552.6,666.6 553.6,663.4 554.6,658.0 555.6,655.1 556.6,649.7 557.6,651.9 558.6,650.3 559.6,645.8 560.6,641.6 561.6,638.0 562.6,630.2 563.6,621.8 564.6,615.6 565.6,607.9 566.6,615.0 567.6,620.4 568.6,631.9 569.6,631.2 570.6,618.5 571.6,602.9 572.6,583.0 573.6,568.3 574.6,560.1 575.6,555.8 576.6,552.2 577.6,554.2 578.6,565.7 579.6,577.7 580.6,585.9 581.6,594.8 582.6,604.9 583.6,613.7 584.6,624.8 585.6,628.2 586.6,621.5 587.6,619.8 588.6,613.9 589.6,630.6 590.6,637.3 591.6,637.0 592.6,634.8 593.6,635.1 594.6,634.4 595.6,624.9 596.6,618.8 597.6,623.3 598.6,628.7 599.6,625.5 600.6,626.9 601.6,633.7 602.6,628.9 603.6,628.7 604.6,631.8 605.6,635.3 606.6,637.1 607.6,636.2 608.6,629.7 609.6,631.6 610.6,629.2 611.6,625.1 612.6,624.4 613.6,631.2 614.6,638.9 615.6,645.5 616.6,644.4 617.6,645.4 618.6,644.5 619.6,642.5 620.6,639.6 621.6,634.2 622.6,628.6 623.6,630.2 624.6,626.1 625.6,614.3 626.6,592.9 627.6,567.2 628.6,556.1 629.6,556.6 630.6,567.6 631.6,581.7 632.6,588.9 633.6,598.3 634.6,594.0 635.6,586.0 636.6,556.6 637.6,514.5 638.6,490.2 639.6,487.5 640.6,510.5 641.6,554.4 642.6,589.1 643.6,602.0 644.6,593.4 645.6,603.9 646.6,619.2 647.6,626.4 648.6,628.8 649.6,628.0 650.6,632.6 651.6,638.5 652.6,640.0 653.6,633.7 654.6,632.2 655.6,627.8 656.6,621.5 657.6,615.7 658.6,616.1 659.6,627.3 660.6,633.5 661.6,633.0 662.6,624.9 663.6,624.0 664.6,620.5 665.6,627.2 666.6,633.2 667.6,635.5 668.6,638.0 669.6,636.7 670.6,629.8 671.6,614.0 672.7,604.8 673.7,613.8 674.7,620.5 675.7,613.7 676.7,620.0 677.7,620.8 678.7,622.1 679.7,623.6 680.7,628.8 681.7,625.2 682.7,625.1 683.7,616.1 684.7,612.2 685.7,622.6 686.7,635.3 687.7,637.5 688.7,635.9 689.7,632.0 690.7,630.5 691.7,624.5 692.7,616.0 693.7,599.6 694.7,585.6 695.7,562.5 696.7,541.2 697.7,528.4 698.7,521.1 699.7,530.2 700.7,540.8 701.7,552.6 702.7,564.7 703.7,578.5 704.7,598.0 705.7,616.2 706.7,628.1 707.7,627.4 708.7,629.0 709.7,632.4 710.7,637.8 711.7,641.3 712.7,650.9 713.7,649.3 714.7,646.5 715.7,641.2 716.7,642.3 717.7,639.5 718.7,639.3 719.7,635.4 720.7,630.2 721.7,634.5 722.7,631.4 723.7,619.9 724.7,622.2 725.7,621.4 726.7,626.4 727.7,635.1 728.7,642.2 729.7,645.2 730.7,639.1 731.7,627.5 732.7,622.5 733.7,614.7 734.7,617.5 735.7,626.0 736.7,632.4 737.7,641.6 738.7,642.8 739.7,632.4 740.7,627.1 741.7,637.4 742.7,641.4 743.7,644.5 744.7,639.1 745.7,639.6 746.7,633.7 747.7,627.8 748.7,621.0 749.7,622.4 750.7,621.4 751.7,628.5 752.7,635.7 753.7,633.4 754.7,624.6 755.7,607.9 756.7,592.0 757.7,582.9 758.7,575.3 759.7,568.2 760.7,563.3 761.7,571.7 762.7,582.3 763.7,600.6 764.7,618.4 765.7,636.1 766.7,644.7 767.7,644.4 768.7,643.4 769.7,642.8 770.7,645.9 771.7,646.2 772.7,647.3 773.7,643.9 774.7,642.8 775.7,648.4 776.7,645.2 777.7,641.6 778.7,635.9 779.7,641.5 780.7,642.4 781.7,628.8 782.7,624.1 783.7,624.3 784.7,628.1 785.7,636.1 786.7,642.2 787.7,639.7 788.7,644.5 789.7,650.4 790.7,650.5 791.7,648.2 792.7,640.8 793.7,638.9 794.7,644.1 795.7,630.6 796.7,636.6 797.7,633.4 798.7,646.3 799.7,646.2 800.7,652.4 801.7,653.8 802.7,650.4 803.7,647.4 804.7,639.7 805.7,640.4 806.7,643.4 807.7,645.8 808.7,643.4 809.7,639.3 810.7,630.2 811.7,631.3 812.7,638.9 813.7,645.9 814.7,647.5 815.7,647.3 816.8,642.1 817.8,629.1 818.8,616.0 819.8,600.9 820.8,600.7 821.8,603.9 822.8,610.8 823.8,617.3 824.8,623.2 825.8,637.3 826.8,640.7 827.8,642.2 828.8,633.4 829.8,637.4 830.8,635.3 831.8,642.7 832.8,648.3 833.8,650.1 834.8,651.3 835.8,649.3 836.8,648.3 837.8,647.0 838.8,638.6 839.8,644.8 840.8,651.9 841.8,658.3 842.8,660.1 843.8,661.9 844.8,654.1 845.8,639.3 846.8,632.1 847.8,638.5 848.8,639.9 849.8,647.7 850.8,651.0 851.8,650.6 852.8,644.9 853.8,640.8 854.8,638.9 855.8,641.2 856.8,649.1 857.8,654.0 858.8,656.0 859.8,653.9 860.8,652.3 861.8,653.0 862.8,659.5 863.8,656.4 864.8,654.3 865.8,653.6 866.8,645.1 867.8,643.4 868.8,638.2 869.8,630.2 870.8,632.0 871.8,643.5 872.8,647.8 873.8,650.9 874.8,651.5 875.8,652.3 876.8,649.9 877.8,642.2 878.8,634.2 879.8,627.3 880.8,619.6 881.8,613.5 882.8,609.9 883.8,611.7 884.8,618.4 885.8,625.4 886.8,629.3 887.8,628.8 888.8,626.5 889.8,629.5 890.8,629.9 891.8,622.3 892.8,631.5 893.8,642.5 894.8,653.6 895.8,656.7 896.8,656.9 897.8,648.5 898.8,643.4 899.8,643.6 900.8,642.9 901.8,647.3 902.8,645.6 903.8,645.0 904.8,633.8 905.8,633.9 906.8,648.5 907.8,648.5 908.8,650.7 909.8,648.4 910.8,653.0 911.8,652.7 912.8,655.3 913.8,655.1 914.8,646.4 915.8,629.2 916.8,625.2 917.8,622.3 918.8,635.4 919.8,645.3 920.8,640.9 921.8,635.9 922.8,643.0 923.8,656.7 924.8,662.5 925.8,660.9 926.8,659.0 927.8,654.0 928.8,658.0 929.8,657.8 930.8,654.9 931.8,654.2 932.8,650.9 933.8,645.6 934.8,652.2 935.8,657.7 936.8,659.8 937.8,658.7 938.8,657.7 939.8,655.3 940.8,651.8 941.8,642.3 942.8,632.9 943.8,627.4 944.8,629.5 945.8,633.2 946.8,640.5 947.8,643.4 948.8,651.5 949.8,652.7 950.8,653.0 951.8,649.6 952.8,653.0 953.8,653.7 954.8,652.9 955.8,651.6 956.8,646.6 957.8,654.7 958.8,657.5 959.8,654.9 960.8,653.6 961.9,657.5 962.9,660.0 963.9,660.7 964.9,656.5 965.9,656.3 966.9,659.2 967.9,657.0 968.9,657.0 969.9,658.2 970.9,653.7 971.9,645.2 972.9,646.7 973.9,637.8 974.9,637.3 975.9,646.9 976.9,652.1 977.9,655.9 978.9,654.3 979.9,650.7 980.9,647.6 981.9,653.5 982.9,653.3 983.9,650.2 984.9,634.3 985.9,632.0 986.9,636.5 987.9,653.5 988.9,663.8 989.9,662.5 990.9,660.0 991.9,658.4 992.9,658.5 993.9,656.9 994.9,659.5 995.9,663.5 996.9,663.4 997.9,660.7 998.9,653.0 999.9,639.8 1000.9,634.0 1001.9,634.1 1002.9,633.3 1003.9,647.3 1004.9,655.3 1005.9,646.0 1006.9,634.1 1007.9,634.0 1008.9,638.7 1009.9,643.8 1010.9,645.4 1011.9,638.6 1012.9,649.7 1013.9,656.6 1014.9,660.3 1015.9,657.3 1016.9,653.7 1017.9,654.0 1018.9,650.9 1019.9,650.9 1020.9,647.0 1021.9,651.6 1022.9,659.3 1023.9,664.5 1024.9,660.6 1025.9,656.5 1026.9,653.3 1027.9,650.3 1028.9,653.2 1029.9,655.9 1030.9,659.3 1031.9,655.5 1032.9,659.3 1033.9,658.4 1034.9,656.2 1035.9,645.9 1036.9,642.6 1037.9,637.5 1038.9,642.4 1039.9,639.5 1040.9,639.4 1041.9,644.5 1042.9,656.2 1043.9,659.6 1044.9,659.1 1045.9,650.2 1046.9,654.3 1047.9,655.9 1048.9,654.9 1049.9,652.3 1050.9,658.5 1051.9,659.9 1052.9,666.6 1053.9,665.2 1054.9,664.7 1055.9,666.6 1056.9,662.2 1057.9,660.3 1058.9,655.6 1059.9,650.7 1060.9,642.4 1061.9,638.5 1062.9,651.0 1063.9,660.0 1064.9,662.3 1065.9,662.3 1066.9,658.5 1067.9,655.1 1068.9,658.4 1069.9,655.9 1070.9,656.8 1071.9,641.4 1072.9,636.5 1073.9,633.7 1074.9,634.3 1075.9,637.7 1076.9,646.3 1077.9,658.9 1078.9,661.8 1079.9,659.3 1080.9,660.3 1081.9,658.1 1082.9,660.5 1083.9,660.3 1084.9,660.6 1085.9,661.2 1086.9,657.8 1087.9,659.8 1088.9,657.3 1089.9,654.9 1090.9,647.9 1091.9,633.8 1092.9,641.4 1093.9,657.1 1094.9,665.2 1095.9,663.9 1096.9,657.2 1097.9,655.7 1098.9,654.6 1099.9,649.1 1100.9,657.3 1101.9,653.8 1102.9,647.3 1103.9,650.0 1104.9,642.5 1106.0,633.2 1107.0,630.5 1108.0,643.0 1109.0,656.2 1110.0,657.5 1111.0,654.9 1112.0,635.9 1113.0,638.2 1114.0,649.4 1115.0,656.6 1116.0,661.3 1117.0,661.1 1118.0,661.8 1119.0,655.4 1120.0,654.4 1121.0,644.0 1122.0,649.4 1123.0,656.0 1124.0,663.5 1125.0,661.8 1126.0,665.5 1127.0,667.5 1128.0,663.0 1129.0,656.9 1130.0,641.7 1131.0,633.2 1132.0,643.7 1133.0,648.2 1134.0,649.0 1135.0,647.3 1136.0,641.6 1137.0,656.5 1138.0,655.3 1139.0,658.0 1140.0,659.5 1141.0,657.2 1142.0,656.5 1143.0,658.7 1144.0,655.2 1145.0,651.7 1146.0,640.6 1147.0,635.8 1148.0,634.3 1149.0,631.2 1150.0,627.2 1151.0,626.2 1152.0,640.1 1153.0,642.6 1154.0,637.0 1155.0,646.0 1156.0,643.1 1157.0,646.3 1158.0,632.6 1159.0,632.6 1160.0,642.4 1161.0,653.8 1162.0,653.5 1163.0,651.7 1164.0,647.7 1165.0,641.3 1166.0,640.6 1167.0,643.5 1168.0,643.9 1169.0,641.3 1170.0,627.6 1171.0,618.6 1172.0,631.6 1173.0,639.2 1174.0,647.0 1175.0,643.4 1176.0,645.1 1177.0,644.7 1178.0,647.6" fill="none" stroke="#7e2f8e" stroke-opacity="0.85" stroke-width="2.2" stroke-linejoin="round"/></g><path d="M516.8 468V752" stroke="#555" stroke-width="1.4"/><path d="M639.3 468V752" stroke="#555" stroke-width="1.4"/><rect x="456" y="468" width="722" height="284" fill="none" stroke="#7a7a7a" stroke-width="2"/><path d="M455.5 750v5" stroke="#7a7a7a"/><text x="455.5" y="766" font-family="Liberation Sans" font-size="9.6" fill="#262626" text-anchor="middle">0</text><path d="M527.8 750v5" stroke="#7a7a7a"/><text x="527.8" y="766" font-family="Liberation Sans" font-size="9.6" fill="#262626" text-anchor="middle">0.2</text><path d="M600.0 750v5" stroke="#7a7a7a"/><text x="600.0" y="766" font-family="Liberation Sans" font-size="9.6" fill="#262626" text-anchor="middle">0.4</text><path d="M672.2 750v5" stroke="#7a7a7a"/><text x="672.2" y="766" font-family="Liberation Sans" font-size="9.6" fill="#262626" text-anchor="middle">0.6</text><path d="M744.5 750v5" stroke="#7a7a7a"/><text x="744.5" y="766" font-family="Liberation Sans" font-size="9.6" fill="#262626" text-anchor="middle">0.8</text><path d="M816.8 750v5" stroke="#7a7a7a"/><text x="816.8" y="766" font-family="Liberation Sans" font-size="9.6" fill="#262626" text-anchor="middle">1.0</text><path d="M889.0 750v5" stroke="#7a7a7a"/><text x="889.0" y="766" font-family="Liberation Sans" font-size="9.6" fill="#262626" text-anchor="middle">1.2</text><path d="M961.2 750v5" stroke="#7a7a7a"/><text x="961.2" y="766" font-family="Liberation Sans" font-size="9.6" fill="#262626" text-anchor="middle">1.4</text><path d="M1033.5 750v5" stroke="#7a7a7a"/><text x="1033.5" y="766" font-family="Liberation Sans" font-size="9.6" fill="#262626" text-anchor="middle">1.6</text><path d="M1105.8 750v5" stroke="#7a7a7a"/><text x="1105.8" y="766" font-family="Liberation Sans" font-size="9.6" fill="#262626" text-anchor="middle">1.8</text><path d="M1178.0 750v5" stroke="#7a7a7a"/><text x="1178.0" y="766" font-family="Liberation Sans" font-size="9.6" fill="#262626" text-anchor="middle">2.0</text><path d="M453 490.2h5" stroke="#7a7a7a"/><text x="448" y="494.2" font-family="Liberation Sans" font-size="9.6" fill="#262626" text-anchor="end">-30</text><path d="M453 535.1h5" stroke="#7a7a7a"/><text x="448" y="539.1" font-family="Liberation Sans" font-size="9.6" fill="#262626" text-anchor="end">-40</text><path d="M453 579.9h5" stroke="#7a7a7a"/><text x="448" y="583.9" font-family="Liberation Sans" font-size="9.6" fill="#262626" text-anchor="end">-50</text><path d="M453 624.8h5" stroke="#7a7a7a"/><text x="448" y="628.8" font-family="Liberation Sans" font-size="9.6" fill="#262626" text-anchor="end">-60</text><path d="M453 669.6h5" stroke="#7a7a7a"/><text x="448" y="673.6" font-family="Liberation Sans" font-size="9.6" fill="#262626" text-anchor="end">-70</text><path d="M453 714.5h5" stroke="#7a7a7a"/><text x="448" y="718.5" font-family="Liberation Sans" font-size="9.6" fill="#262626" text-anchor="end">-80</text><text x="809" y="787" font-family="Liberation Sans" fill="#262626" font-size="10" text-anchor="middle">Frequency (kHz)</text><text transform="translate(420.5,608) rotate(-90)" font-family="Liberation Sans" fill="#262626" font-size="10.3" text-anchor="middle">Power Spectrum (dB)</text><rect x="499" y="751" width="34" height="19" fill="#5a5b5d"/><text x="516" y="765" font-family="Liberation Sans" font-size="12" font-weight="bold" fill="#fff" text-anchor="middle">0.17</text><rect x="561" y="751" width="34" height="19" fill="#5a5b5d"/><text x="578" y="765" font-family="Liberation Sans" font-size="12" font-weight="bold" fill="#fff" text-anchor="middle">0.34</text><rect x="622" y="751" width="34" height="19" fill="#5a5b5d"/><text x="639" y="765" font-family="Liberation Sans" font-size="12" font-weight="bold" fill="#fff" text-anchor="middle">0.51</text><circle cx="516.8" cy="519.4" r="3" fill="#d95319"/><circle cx="516.8" cy="519.8" r="3" fill="#7e2f8e"/><circle cx="516.8" cy="542.7" r="3" fill="#edb120"/><circle cx="639.3" cy="487.5" r="3" fill="#7e2f8e"/><circle cx="639.3" cy="486.2" r="3" fill="#d95319"/><circle cx="639.3" cy="479.9" r="3" fill="#edb120"/><rect x="468" y="512" width="40" height="18" fill="#fff" stroke="#d95319" stroke-width="2"/><text x="473" y="526" font-family="Liberation Sans" font-size="12" fill="#111">-36.5</text><rect x="468" y="533" width="40" height="18" fill="#fff" stroke="#7e2f8e" stroke-width="2"/><text x="473" y="547" font-family="Liberation Sans" font-size="12" fill="#111">-36.6*</text><rect x="468" y="555" width="40" height="18" fill="#fff" stroke="#edb120" stroke-width="2"/><text x="473" y="569" font-family="Liberation Sans" font-size="12" fill="#111">-41.7</text><rect x="644" y="473" width="40" height="18" fill="#fff" stroke="#edb120" stroke-width="2"/><text x="649" y="487" font-family="Liberation Sans" font-size="12" fill="#111">-27.7*</text><rect x="644" y="495" width="40" height="18" fill="#fff" stroke="#d95319" stroke-width="2"/><text x="649" y="509" font-family="Liberation Sans" font-size="12" fill="#111">-29.1*</text><rect x="644" y="516" width="40" height="18" fill="#fff" stroke="#7e2f8e" stroke-width="2"/><text x="649" y="530" font-family="Liberation Sans" font-size="12" fill="#111">-29.4</text></svg>
</body></html>
